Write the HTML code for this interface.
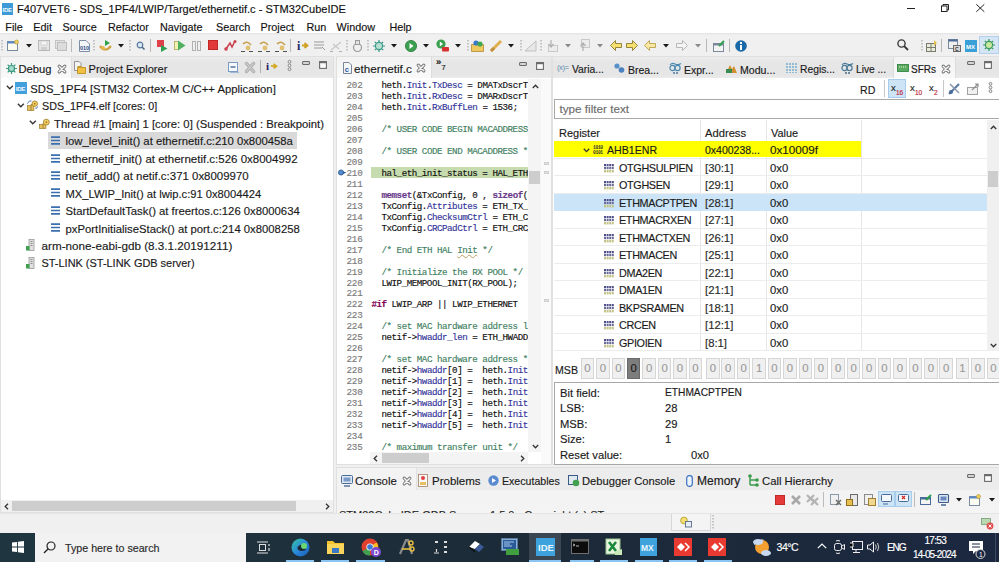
<!DOCTYPE html>
<html><head><meta charset="utf-8">
<style>
*{margin:0;padding:0;box-sizing:border-box}
html,body{width:999px;height:562px;overflow:hidden;background:#f0f0f0;font-family:"Liberation Sans",sans-serif;color:#1e1e1e}
.a{position:absolute;white-space:nowrap;-webkit-text-stroke:0.15px currentColor}
svg.a{overflow:visible}
.code{position:absolute;white-space:pre;font-family:"Liberation Mono",monospace;font-size:9.2px;letter-spacing:-0.47px;line-height:10.93px;color:#101010}
.ln{color:#7a7a7a}
.fl{color:#34349a}
.cm{color:#3f7f5f}
.pp{color:#7f0055;font-weight:bold}
.fn{color:#6a3a8a;font-weight:bold}
</style></head><body>

<div class="a" style="left:0px;top:0px;width:999px;height:33px;background:#fff;"></div>
<div class="a" style="left:2px;top:3px;width:11px;height:12px;background:#3d9ad6;"></div>
<svg class="a" style="left:2px;top:3px" width="11" height="12" viewBox="0 0 11 12"><text x="0.6" y="8.8" font-size="6" font-family="Liberation Sans" font-weight="bold" fill="#f0f8fe" letter-spacing="-0.35">IDE</text></svg>
<div class="a" style="left:17px;top:1.30px;line-height:16px;font-size:11.05px;color:#111;">F407VET6 - SDS_1PF4/LWIP/Target/ethernetif.c - STM32CubeIDE</div>
<div class="a" style="left:907px;top:8px;width:7.5px;height:1px;background:#222;"></div>
<svg class="a" style="left:941px;top:4px" width="8" height="8" viewBox="0 0 8 8"><rect x="0.5" y="2" width="5.5" height="5.5" fill="none" stroke="#222"/><path d="M2 2V0.5H7.5V6H6" fill="none" stroke="#222"/></svg>
<svg class="a" style="left:976px;top:4px" width="9" height="8" viewBox="0 0 9 8"><path d="M0.3 0.3L8.3 7.8M8.3 0.3L0.3 7.8" stroke="#222" stroke-width="1"/></svg>
<div class="a" style="left:5.3px;top:19.10px;line-height:16px;font-size:10.8px;color:#111;">File</div>
<div class="a" style="left:33.3px;top:19.10px;line-height:16px;font-size:10.8px;color:#111;">Edit</div>
<div class="a" style="left:62.5px;top:19.10px;line-height:16px;font-size:10.8px;color:#111;">Source</div>
<div class="a" style="left:108px;top:19.10px;line-height:16px;font-size:10.8px;color:#111;">Refactor</div>
<div class="a" style="left:160px;top:19.10px;line-height:16px;font-size:10.8px;color:#111;">Navigate</div>
<div class="a" style="left:216px;top:19.10px;line-height:16px;font-size:10.8px;color:#111;">Search</div>
<div class="a" style="left:260.5px;top:19.10px;line-height:16px;font-size:10.8px;color:#111;">Project</div>
<div class="a" style="left:306.4px;top:19.10px;line-height:16px;font-size:10.8px;color:#111;">Run</div>
<div class="a" style="left:336.6px;top:19.10px;line-height:16px;font-size:10.8px;color:#111;">Window</div>
<div class="a" style="left:389.4px;top:19.10px;line-height:16px;font-size:10.8px;color:#111;">Help</div>
<div class="a" style="left:0px;top:33px;width:999px;height:23px;background:#f0f0f0;"></div>
<div class="a" style="left:0;top:33px;width:999px;height:2px;background:linear-gradient(#e2e2e2,#f0f0f0)"></div>
<svg class="a" style="left:1px;top:40px" width="2" height="11" viewBox="0 0 2 11"><path d="M1 0V11" stroke="#9a9a9a" stroke-width="1" stroke-dasharray="1.5 1.5"/></svg>
<svg class="a" style="left:7px;top:40px" width="12" height="11" viewBox="0 0 12 11"><rect x="0.5" y="1.5" width="10" height="9" fill="#fbfbf0" stroke="#7a8aa0"/><rect x="0.5" y="1.5" width="10" height="2" fill="#5a8ac8"/><circle cx="9.5" cy="2" r="2" fill="#f0d060" stroke="#b09030" stroke-width="0.6"/></svg>
<svg class="a" style="left:26px;top:44px" width="6" height="4" viewBox="0 0 6 4"><path d="M0 0H6L3 3.5Z" fill="#1a1a1a"/></svg>
<svg class="a" style="left:38px;top:40px" width="12" height="11" viewBox="0 0 12 11"><rect x="0.5" y="0.5" width="11" height="10" fill="#e6e6e6" stroke="#b8b8b8"/><rect x="3" y="1" width="6" height="4" fill="#f4f4f4" stroke="#c4c4c4" stroke-width="0.6"/><rect x="3" y="7" width="6" height="3" fill="#cfcfcf"/></svg>
<svg class="a" style="left:55px;top:40px" width="12" height="11" viewBox="0 0 12 11"><rect x="0.5" y="0.5" width="9" height="8" fill="#e2e2e2" stroke="#c4c4c4"/><rect x="2.5" y="2.5" width="9" height="8" fill="#dcdcdc" stroke="#bdbdbd"/></svg>
<div class="a" style="left:71px;top:39px;width:1px;height:13px;background:#b8b8b8;"></div>
<svg class="a" style="left:79px;top:40px" width="11" height="12" viewBox="0 0 11 12"><path d="M0.5 0.5H7L10.5 4V11.5H0.5Z" fill="#f4f6fa" stroke="#7d8ea6"/><text x="1" y="10" font-size="5.5" font-family="Liberation Sans" font-weight="bold" fill="#2a4a80">010</text></svg>
<svg class="a" style="left:93px;top:40px" width="2" height="11" viewBox="0 0 2 11"><path d="M1 0V11" stroke="#9a9a9a" stroke-width="1" stroke-dasharray="1.5 1.5"/></svg>
<svg class="a" style="left:99px;top:39px" width="13" height="13" viewBox="0 0 13 13"><path d="M1 7 Q6 14 12 7" fill="none" stroke="#d0a040" stroke-width="2.2"/><circle cx="4" cy="9" r="2" fill="#e8b850"/><path d="M6 1L11 4L6 7Z" fill="#2fa04a"/></svg>
<svg class="a" style="left:118px;top:44px" width="6" height="4" viewBox="0 0 6 4"><path d="M0 0H6L3 3.5Z" fill="#1a1a1a"/></svg>
<svg class="a" style="left:129px;top:40px" width="2" height="11" viewBox="0 0 2 11"><path d="M1 0V11" stroke="#9a9a9a" stroke-width="1" stroke-dasharray="1.5 1.5"/></svg>
<svg class="a" style="left:136px;top:41px" width="9" height="9" viewBox="0 0 9 9"><circle cx="4" cy="4" r="2.8" fill="#d8e8f4" stroke="#5a7a9a" stroke-width="1.2"/><path d="M6 6L8.5 8.5" stroke="#4a6a8a" stroke-width="1.6"/></svg>
<div class="a" style="left:150px;top:39px;width:1px;height:13px;background:#b8b8b8;"></div>
<svg class="a" style="left:157px;top:40px" width="11" height="12" viewBox="0 0 11 12"><rect x="0" y="0" width="7" height="7" fill="#e0404a"/><path d="M4 5L10.5 8.5L4 12Z" fill="#30a050"/></svg>
<svg class="a" style="left:174px;top:40px" width="12" height="11" viewBox="0 0 12 11"><rect x="0.5" y="1.5" width="4" height="8" fill="#f4f0b0" stroke="#b0a860" stroke-width="0.8"/><path d="M4 0.5L11.5 5.5L4 10.5Z" fill="#50b060"/></svg>
<svg class="a" style="left:192px;top:40px" width="9" height="11" viewBox="0 0 9 11"><rect x="0.5" y="1.5" width="3" height="9" fill="#f0f0f0" stroke="#b0b0b0"/><rect x="5.5" y="1.5" width="3" height="9" fill="#f0f0f0" stroke="#b0b0b0"/></svg>
<svg class="a" style="left:208px;top:40px" width="10" height="10" viewBox="0 0 10 10"><rect x="0.5" y="0.5" width="9" height="9" fill="#e23a3a" stroke="#c02828"/></svg>
<svg class="a" style="left:224px;top:40px" width="12" height="11" viewBox="0 0 12 11"><path d="M2 9L6 3L8 7L11 1" fill="none" stroke="#c84050" stroke-width="1.6"/><circle cx="2" cy="9" r="1.8" fill="#d04050"/><circle cx="11" cy="1.5" r="1.5" fill="#d04050"/></svg>
<svg class="a" style="left:241px;top:40px" width="12" height="12" viewBox="0 0 12 12"><path d="M2 4Q6 0 10 5" fill="none" stroke="#c8a050" stroke-width="1.6"/><circle cx="7" cy="8" r="2.4" fill="#e0c070"/><path d="M0 11.5H4M8 11.5H12" stroke="#505050" stroke-width="1"/></svg>
<svg class="a" style="left:258px;top:40px" width="12" height="12" viewBox="0 0 12 12"><path d="M2 4Q6 0 10 5" fill="none" stroke="#c8a050" stroke-width="1.6"/><circle cx="7" cy="8" r="2.4" fill="#e0c070"/><path d="M0 11.5H4M8 11.5H12" stroke="#505050" stroke-width="1"/></svg>
<svg class="a" style="left:275px;top:40px" width="12" height="12" viewBox="0 0 12 12"><path d="M2 4Q6 0 10 5" fill="none" stroke="#c8a050" stroke-width="1.6"/><circle cx="7" cy="8" r="2.4" fill="#e0c070"/><path d="M0 11.5H4M8 11.5H12" stroke="#505050" stroke-width="1"/></svg>
<div class="a" style="left:290px;top:39px;width:1px;height:13px;background:#b8b8b8;"></div>
<svg class="a" style="left:297px;top:40px" width="12" height="11" viewBox="0 0 12 11"><text x="0" y="10" font-size="12" font-family="Liberation Serif" font-weight="bold" fill="#202a6a">i</text><path d="M5 5.5H9M7.5 3L10.5 5.5L7.5 8" fill="none" stroke="#d0a020" stroke-width="1.8"/></svg>
<svg class="a" style="left:314px;top:41px" width="12" height="10" viewBox="0 0 12 10"><path d="M0 1H10M0 4H10M0 7H8" stroke="#9a9a9a" stroke-width="1.2"/><path d="M8 6L11 9" stroke="#9a9a9a"/></svg>
<svg class="a" style="left:330px;top:40px" width="13" height="12" viewBox="0 0 13 12"><path d="M1 10L11 2M3 4L9 9" stroke="#c8c8c8" stroke-width="1.4"/><path d="M0 11.5H3M9 11.5H12" stroke="#b0b0b0"/></svg>
<svg class="a" style="left:346px;top:40px" width="2" height="11" viewBox="0 0 2 11"><path d="M1 0V11" stroke="#9a9a9a" stroke-width="1" stroke-dasharray="1.5 1.5"/></svg>
<svg class="a" style="left:352px;top:40px" width="11" height="12" viewBox="0 0 11 12"><circle cx="5.5" cy="7.5" r="4" fill="#f0f0f0" stroke="#9a9a9a" stroke-width="1.2"/><rect x="3.5" y="0.5" width="4" height="4" fill="#e0e0e0" stroke="#9a9a9a"/></svg>
<svg class="a" style="left:367px;top:40px" width="2" height="11" viewBox="0 0 2 11"><path d="M1 0V11" stroke="#9a9a9a" stroke-width="1" stroke-dasharray="1.5 1.5"/></svg>
<svg class="a" style="left:373px;top:40px" width="12" height="12" viewBox="0 0 12 12"><circle cx="6" cy="6" r="3.6" fill="#b8e0d0" stroke="#3a9a8a" stroke-width="1.2"/><path d="M6 0V2M6 10V12M0 6H2M10 6H12M1.8 1.8L3.2 3.2M8.8 8.8L10.2 10.2M1.8 10.2L3.2 8.8M8.8 3.2L10.2 1.8" stroke="#3a9a8a" stroke-width="1.2"/></svg>
<svg class="a" style="left:391px;top:44px" width="6" height="4" viewBox="0 0 6 4"><path d="M0 0H6L3 3.5Z" fill="#1a1a1a"/></svg>
<svg class="a" style="left:405px;top:40px" width="12" height="12" viewBox="0 0 12 12"><circle cx="6" cy="6" r="5.6" fill="#3aa050" stroke="#2a7a3a" stroke-width="0.8"/><path d="M4.5 3L8.5 6L4.5 9Z" fill="#fff"/></svg>
<svg class="a" style="left:423px;top:44px" width="6" height="4" viewBox="0 0 6 4"><path d="M0 0H6L3 3.5Z" fill="#1a1a1a"/></svg>
<svg class="a" style="left:436px;top:39px" width="14" height="13" viewBox="0 0 14 13"><circle cx="5" cy="5" r="4.6" fill="#3aa050"/><path d="M3.8 2.5L7 5L3.8 7.5Z" fill="#fff"/><rect x="6" y="8" width="7" height="4.5" rx="1" fill="#d83030"/></svg>
<svg class="a" style="left:455px;top:44px" width="6" height="4" viewBox="0 0 6 4"><path d="M0 0H6L3 3.5Z" fill="#1a1a1a"/></svg>
<svg class="a" style="left:467px;top:40px" width="2" height="11" viewBox="0 0 2 11"><path d="M1 0V11" stroke="#9a9a9a" stroke-width="1" stroke-dasharray="1.5 1.5"/></svg>
<svg class="a" style="left:471px;top:40px" width="13" height="12" viewBox="0 0 13 12"><path d="M0.5 4.5H12.5V11.5H0.5Z" fill="#f0c860" stroke="#b08a30" stroke-width="0.8"/><circle cx="5" cy="3" r="2.6" fill="#3a78c8"/><circle cx="9" cy="4" r="2.6" fill="#40a850"/></svg>
<svg class="a" style="left:490px;top:40px" width="12" height="12" viewBox="0 0 12 12"><path d="M1 11L11 1" stroke="#e0b050" stroke-width="3"/><path d="M1 11L4 8" stroke="#c09040" stroke-width="3"/></svg>
<svg class="a" style="left:508px;top:44px" width="6" height="4" viewBox="0 0 6 4"><path d="M0 0H6L3 3.5Z" fill="#1a1a1a"/></svg>
<svg class="a" style="left:520px;top:40px" width="2" height="11" viewBox="0 0 2 11"><path d="M1 0V11" stroke="#9a9a9a" stroke-width="1" stroke-dasharray="1.5 1.5"/></svg>
<svg class="a" style="left:524px;top:40px" width="13" height="12" viewBox="0 0 13 12"><path d="M1 11L12 1V11Z" fill="#e8e8e8" stroke="#c0c0c0"/></svg>
<svg class="a" style="left:540px;top:40px" width="2" height="11" viewBox="0 0 2 11"><path d="M1 0V11" stroke="#9a9a9a" stroke-width="1" stroke-dasharray="1.5 1.5"/></svg>
<svg class="a" style="left:546px;top:40px" width="12" height="12" viewBox="0 0 12 12"><rect x="2.5" y="5.5" width="9" height="6" fill="#ececec" stroke="#c8c8c8"/><path d="M5 0V6M2.5 4L5 7L7.5 4" fill="none" stroke="#b0b0b0" stroke-width="1.2"/></svg>
<svg class="a" style="left:565px;top:44px" width="6" height="4" viewBox="0 0 6 4"><path d="M0 0H6L3 3.5Z" fill="#8a8a8a"/></svg>
<svg class="a" style="left:578px;top:39px" width="12" height="13" viewBox="0 0 12 13"><rect x="3.5" y="0.5" width="8" height="8" fill="#ececec" stroke="#c8c8c8"/><path d="M5 12V5M2.5 7L5 4L7.5 7" fill="none" stroke="#b0b0b0" stroke-width="1.2"/></svg>
<svg class="a" style="left:597px;top:44px" width="6" height="4" viewBox="0 0 6 4"><path d="M0 0H6L3 3.5Z" fill="#8a8a8a"/></svg>
<svg class="a" style="left:610px;top:40px" width="12" height="11" viewBox="0 0 12 11"><path d="M0.5 5.5L5.5 0.5V3.5H11.5V7.5H5.5V10.5Z" fill="#f8e070" stroke="#8a7a30" stroke-width="0.9"/></svg>
<svg class="a" style="left:626px;top:40px" width="12" height="11" viewBox="0 0 12 11"><path d="M11.5 5.5L6.5 0.5V3.5H0.5V7.5H6.5V10.5Z" fill="#f8e070" stroke="#8a7a30" stroke-width="0.9"/></svg>
<svg class="a" style="left:644px;top:40px" width="12" height="11" viewBox="0 0 12 11"><path d="M0.5 5.5L5.5 0.5V3.5H11.5V7.5H5.5V10.5Z" fill="#f8e8a0" stroke="#b8a050" stroke-width="0.9"/></svg>
<svg class="a" style="left:663px;top:44px" width="6" height="4" viewBox="0 0 6 4"><path d="M0 0H6L3 3.5Z" fill="#1a1a1a"/></svg>
<svg class="a" style="left:676px;top:40px" width="12" height="11" viewBox="0 0 12 11"><path d="M11.5 5.5L6.5 0.5V3.5H0.5V7.5H6.5V10.5Z" fill="#f4f4f4" stroke="#b0b0b0" stroke-width="0.9"/></svg>
<svg class="a" style="left:695px;top:44px" width="6" height="4" viewBox="0 0 6 4"><path d="M0 0H6L3 3.5Z" fill="#8a8a8a"/></svg>
<div class="a" style="left:706px;top:39px;width:1px;height:13px;background:#b8b8b8;"></div>
<svg class="a" style="left:713px;top:40px" width="12" height="12" viewBox="0 0 12 12"><rect x="0.5" y="3.5" width="10" height="8" fill="#f4f4f4" stroke="#7a8a9a"/><rect x="0.5" y="3.5" width="10" height="2" fill="#7a8a9a"/><path d="M6 6L11 1" stroke="#30a050" stroke-width="2"/></svg>
<div class="a" style="left:729px;top:39px;width:1px;height:13px;background:#b8b8b8;"></div>
<svg class="a" style="left:735px;top:40px" width="12" height="12" viewBox="0 0 12 12"><circle cx="6" cy="6" r="5.8" fill="#1a6aaa"/><rect x="5" y="5" width="2" height="5" fill="#fff"/><rect x="5" y="2" width="2" height="2" fill="#fff"/></svg>
<svg class="a" style="left:897px;top:39px" width="12" height="12" viewBox="0 0 12 12"><circle cx="4.5" cy="4.5" r="3.6" fill="none" stroke="#3a3a3a" stroke-width="1.4"/><path d="M7 7L11 11" stroke="#3a3a3a" stroke-width="1.8"/></svg>
<svg class="a" style="left:921px;top:40px" width="2" height="11" viewBox="0 0 2 11"><path d="M1 0V11" stroke="#9a9a9a" stroke-width="1" stroke-dasharray="1.5 1.5"/></svg>
<svg class="a" style="left:926px;top:40px" width="12" height="12" viewBox="0 0 12 12"><rect x="0.5" y="3.5" width="9" height="8" fill="#e8ecd8" stroke="#7a7a70"/><path d="M5 3.5V11.5M0.5 7.5H9.5" stroke="#7a7a70"/><path d="M8 0L11 3L8 6Z" fill="#e8c050"/></svg>
<div class="a" style="left:941px;top:39px;width:1px;height:13px;background:#b8b8b8;"></div>
<svg class="a" style="left:948px;top:39px" width="13" height="13" viewBox="0 0 13 13"><rect x="0.5" y="0.5" width="9" height="9" fill="#f0f0f0" stroke="#7a8a9a"/><rect x="0.5" y="0.5" width="9" height="2" fill="#4a6a9a"/><rect x="5.5" y="6.5" width="7" height="6" fill="#d8d8d8" stroke="#6a6a6a"/><text x="7" y="12" font-size="5" font-family="Liberation Sans" font-weight="bold" fill="#333">C</text></svg>
<svg class="a" style="left:965px;top:40px" width="12" height="12" viewBox="0 0 12 12"><rect x="0" y="0" width="12" height="12" fill="#3aa0d8"/><text x="1" y="8.5" font-size="6" font-family="Liberation Sans" font-weight="bold" fill="#fff">MX</text></svg>
<div class="a" style="left:979px;top:36px;width:20px;height:18px;background:#d4e6f6;border:1px solid #b4d0ea"></div>
<svg class="a" style="left:983px;top:39px" width="12" height="12" viewBox="0 0 12 12"><circle cx="6" cy="6" r="3.6" fill="#c8e8a0" stroke="#3a9a5a" stroke-width="1.2"/><path d="M6 0V2M6 10V12M0 6H2M10 6H12M1.8 1.8L3.2 3.2M8.8 8.8L10.2 10.2M1.8 10.2L3.2 8.8M8.8 3.2L10.2 1.8" stroke="#3a9a5a" stroke-width="1.2"/></svg>
<div class="a" style="left:0px;top:56px;width:334px;height:457px;background:#fff;border:1px solid #e0e0e0"></div>
<div class="a" style="left:1px;top:57px;width:332px;height:21px;background:linear-gradient(#ececec,#e6e6e6 25%,#e6e6e6 85%,#ebebeb);"></div>
<div class="a" style="left:1px;top:57px;width:70px;height:21px;background:linear-gradient(#f3f3f3,#f9f9f9);"></div>
<div class="a" style="left:71px;top:57px;width:1px;height:21px;background:#e0e0e0;"></div>
<svg class="a" style="left:6px;top:62.5px" width="11" height="11" viewBox="0 0 12 12"><circle cx="6" cy="6" r="3.3" fill="#a8dcc8" stroke="#3a9a80" stroke-width="1.3"/><path d="M6 0V2.2M6 9.8V12M0 6H2.2M9.8 6H12M1.8 1.8L3.4 3.4M8.6 8.6L10.2 10.2M1.8 10.2L3.4 8.6M8.6 3.4L10.2 1.8" stroke="#3a9a80" stroke-width="1.3"/></svg>
<div class="a" style="left:18.5px;top:61.30px;line-height:16px;font-size:11.2px;color:#1a1a1a;">Debug</div>
<svg class="a" style="left:57.5px;top:64.5px" width="8" height="8" viewBox="0 0 8 8"><path d="M1.2 1.2L6.8 6.8M6.8 1.2L1.2 6.8" stroke="#707070" stroke-width="3.2" stroke-linecap="round"/><path d="M1.2 1.2L6.8 6.8M6.8 1.2L1.2 6.8" stroke="#f4f4f4" stroke-width="1.5" stroke-linecap="round"/></svg>
<svg class="a" style="left:74px;top:61px" width="13" height="13" viewBox="0 0 13 13"><path d="M0.5 0.5H5L7 2.5V9.5H0.5Z" fill="#f4f4f4" stroke="#8a8a8a" stroke-width="0.9"/><path d="M3.5 6.5H11.5V12.5H3.5Z" fill="#f0c040" stroke="#c09020" stroke-width="0.9"/><path d="M3.5 5.5H7L8 6.5" fill="#f0c040" stroke="#c09020" stroke-width="0.9"/></svg>
<div class="a" style="left:88.5px;top:61.30px;line-height:16px;font-size:11.1px;color:#1a1a1a;">Project Explorer</div>
<svg class="a" style="left:228px;top:62px" width="11" height="11" viewBox="0 0 11 11"><rect x="0.5" y="0.5" width="9" height="9" fill="#f4f8fc" stroke="#7a9ac0"/><path d="M2.5 5H7.5" stroke="#4a6a90" stroke-width="1.4"/><rect x="2" y="10" width="9" height="1" fill="#a0b8d8"/></svg>
<svg class="a" style="left:245px;top:62px" width="10" height="11" viewBox="0 0 10 11"><path d="M1.5 1.5L8.5 9.5M8.5 1.5L1.5 9.5" stroke="#a8a8a8" stroke-width="3.4" stroke-linecap="round"/><path d="M1.5 1.5L8.5 9.5M8.5 1.5L1.5 9.5" stroke="#c8c8c8" stroke-width="1.8" stroke-linecap="round"/></svg>
<div class="a" style="left:259.5px;top:59.5px;width:1.5px;height:13px;background:#b0b0b0;"></div>
<svg class="a" style="left:266px;top:61px" width="13" height="10" viewBox="0 0 13 10"><text x="0" y="9.3" font-size="11" font-family="Liberation Serif" font-weight="bold" fill="#1a1a5a">i</text><path d="M5 5.2H9M7.6 3L10.5 5.2L7.6 7.4" fill="none" stroke="#d4a820" stroke-width="1.7"/></svg>
<svg class="a" style="left:286.5px;top:60px" width="5" height="11" viewBox="0 0 5 11"><circle cx="2.5" cy="1.8" r="1.4" fill="#f4f4f4" stroke="#7a7a7a" stroke-width="0.9"/><circle cx="2.5" cy="5.5" r="1.4" fill="#f4f4f4" stroke="#7a7a7a" stroke-width="0.9"/><circle cx="2.5" cy="9.2" r="1.4" fill="#f4f4f4" stroke="#7a7a7a" stroke-width="0.9"/></svg>
<svg class="a" style="left:302px;top:61px" width="8" height="4" viewBox="0 0 8 4"><rect x="0.6" y="0.6" width="6.8" height="2.8" rx="0.6" fill="#fafafa" stroke="#6a6a6a" stroke-width="1.1"/></svg>
<svg class="a" style="left:318.5px;top:61.3px" width="8" height="8" viewBox="0 0 8 8"><rect x="0.6" y="0.6" width="6.8" height="6.8" fill="#fcfcfc" stroke="#6a6a6a" stroke-width="1.1"/><rect x="0.6" y="0.6" width="6.8" height="1.6" fill="#6a6a6a"/></svg>
<div class="a" style="left:48px;top:131.8px;width:249px;height:17.6px;background:#d9d9d9;"></div>
<svg class="a" style="left:5.5px;top:85.2px" width="8" height="5" viewBox="0 0 8 5"><path d="M0.8 0.8L3.8 3.8L6.8 0.8" fill="none" stroke="#333" stroke-width="1.3"/></svg>
<svg class="a" style="left:14.5px;top:82.2px" width="12" height="12" viewBox="0 0 12 12"><rect x="0" y="0" width="12" height="12" fill="#41a0dc"/><text x="0.8" y="8.6" font-size="6.2" font-family="Liberation Sans" font-weight="bold" fill="#f0f8fe" letter-spacing="-0.35">IDE</text></svg>
<div class="a" style="left:30.3px;top:80.90px;line-height:16px;font-size:11.3px;color:#1a1a1a;">SDS_1PF4 [STM32 Cortex-M C/C++ Application]</div>
<svg class="a" style="left:17px;top:102.65px" width="8" height="5" viewBox="0 0 8 5"><path d="M0.8 0.8L3.8 3.8L6.8 0.8" fill="none" stroke="#333" stroke-width="1.3"/></svg>
<svg class="a" style="left:27px;top:100.15px" width="11" height="11" viewBox="0 0 12 12"><rect x="0.5" y="6" width="4" height="5.5" fill="#e8c060" stroke="#a08030" stroke-width="0.8"/><rect x="4.5" y="5" width="3" height="6.5" fill="#e8c060" stroke="#a08030" stroke-width="0.8"/><circle cx="8.5" cy="4" r="3" fill="#f4d060" stroke="#a08030" stroke-width="0.9"/><circle cx="8.5" cy="4" r="1" fill="#a08030"/><path d="M0.5 4Q2 0 5 1M9 9Q11 10 11.5 7" fill="none" stroke="#3a6aa0" stroke-width="0.9"/></svg>
<div class="a" style="left:42px;top:98.35px;line-height:16px;font-size:10.75px;color:#1a1a1a;">SDS_1PF4.elf [cores: 0]</div>
<svg class="a" style="left:28.5px;top:120.1px" width="8" height="5" viewBox="0 0 8 5"><path d="M0.8 0.8L3.8 3.8L6.8 0.8" fill="none" stroke="#333" stroke-width="1.3"/></svg>
<svg class="a" style="left:38.5px;top:117.6px" width="11" height="11" viewBox="0 0 12 12"><rect x="0.5" y="7" width="4" height="4.5" fill="#e8c060" stroke="#a08030" stroke-width="0.8"/><rect x="4.5" y="6" width="3" height="5.5" fill="#e8c060" stroke="#a08030" stroke-width="0.8"/><circle cx="8" cy="4.5" r="3.2" fill="#f4d060" stroke="#a08030" stroke-width="0.9"/><circle cx="8" cy="4.5" r="1" fill="#a08030"/></svg>
<div class="a" style="left:54px;top:115.80px;line-height:16px;font-size:11.3px;color:#1a1a1a;">Thread #1 [main] 1 [core: 0] (Suspended : Breakpoint)</div>
<svg class="a" style="left:51px;top:136.05px" width="9" height="9" viewBox="0 0 9 9"><path d="M0 1.2H9M0 4.5H9M0 7.8H9" stroke="#3a70b0" stroke-width="1.7"/></svg>
<div class="a" style="left:65.5px;top:133.25px;line-height:16px;font-size:11.3px;color:#1a1a1a;">low_level_init() at ethernetif.c:210 0x800458a</div>
<svg class="a" style="left:51px;top:153.5px" width="9" height="9" viewBox="0 0 9 9"><path d="M0 1.2H9M0 4.5H9M0 7.8H9" stroke="#3a70b0" stroke-width="1.7"/></svg>
<div class="a" style="left:65.5px;top:150.70px;line-height:16px;font-size:11.5px;color:#1a1a1a;">ethernetif_init() at ethernetif.c:526 0x8004992</div>
<svg class="a" style="left:51px;top:170.95px" width="9" height="9" viewBox="0 0 9 9"><path d="M0 1.2H9M0 4.5H9M0 7.8H9" stroke="#3a70b0" stroke-width="1.7"/></svg>
<div class="a" style="left:65.5px;top:168.15px;line-height:16px;font-size:11.44px;color:#1a1a1a;">netif_add() at netif.c:371 0x8009970</div>
<svg class="a" style="left:51px;top:188.39999999999998px" width="9" height="9" viewBox="0 0 9 9"><path d="M0 1.2H9M0 4.5H9M0 7.8H9" stroke="#3a70b0" stroke-width="1.7"/></svg>
<div class="a" style="left:65.5px;top:185.60px;line-height:16px;font-size:11.2px;color:#1a1a1a;">MX_LWIP_Init() at lwip.c:91 0x8004424</div>
<svg class="a" style="left:51px;top:205.85px" width="9" height="9" viewBox="0 0 9 9"><path d="M0 1.2H9M0 4.5H9M0 7.8H9" stroke="#3a70b0" stroke-width="1.7"/></svg>
<div class="a" style="left:65.5px;top:203.05px;line-height:16px;font-size:11.3px;color:#1a1a1a;">StartDefaultTask() at freertos.c:126 0x8000634</div>
<svg class="a" style="left:51px;top:223.3px" width="9" height="9" viewBox="0 0 9 9"><path d="M0 1.2H9M0 4.5H9M0 7.8H9" stroke="#3a70b0" stroke-width="1.7"/></svg>
<div class="a" style="left:65.5px;top:220.50px;line-height:16px;font-size:11.3px;color:#1a1a1a;">pxPortInitialiseStack() at port.c:214 0x8008258</div>
<svg class="a" style="left:26px;top:239.25px" width="9" height="12" viewBox="0 0 9 12"><rect x="3" y="0.5" width="5" height="11" fill="#e0e0e0" stroke="#9a9a9a" stroke-width="0.8"/><path d="M4.5 2.5H6.5M4.5 4.5H6.5M4.5 6.5H6.5" stroke="#7a7a7a" stroke-width="0.8"/><rect x="0" y="7" width="3.5" height="4.5" fill="#40a050"/></svg>
<div class="a" style="left:41.5px;top:237.95px;line-height:16px;font-size:11.7px;color:#1a1a1a;">arm-none-eabi-gdb (8.3.1.20191211)</div>
<svg class="a" style="left:26px;top:256.7px" width="9" height="12" viewBox="0 0 9 12"><rect x="3" y="0.5" width="5" height="11" fill="#e0e0e0" stroke="#9a9a9a" stroke-width="0.8"/><path d="M4.5 2.5H6.5M4.5 4.5H6.5M4.5 6.5H6.5" stroke="#7a7a7a" stroke-width="0.8"/><rect x="0" y="7" width="3.5" height="4.5" fill="#40a050"/></svg>
<div class="a" style="left:41.5px;top:255.40px;line-height:16px;font-size:10.95px;color:#1a1a1a;">ST-LINK (ST-LINK GDB server)</div>
<div class="a" style="left:1px;top:500px;width:332px;height:12px;background:#f0f0f0;"></div>
<div class="a" style="left:12px;top:501px;width:284px;height:10px;background:#cdcdcd;"></div>
<svg class="a" style="left:4px;top:503px" width="5" height="7" viewBox="0 0 5 7"><path d="M4 0.8L1.2 3.5L4 6.2" fill="none" stroke="#333" stroke-width="1.3"/></svg>
<svg class="a" style="left:325px;top:503px" width="5" height="7" viewBox="0 0 5 7"><path d="M1 0.8L3.8 3.5L1 6.2" fill="none" stroke="#333" stroke-width="1.3"/></svg>
<div class="a" style="left:336px;top:56px;width:216px;height:409px;background:#fff;border:1px solid #e0e0e0"></div>
<div class="a" style="left:337px;top:57px;width:214px;height:21px;background:linear-gradient(#ececec,#e6e6e6 25%,#e6e6e6 85%,#ebebeb);"></div>
<div class="a" style="left:337px;top:57px;width:94px;height:21px;background:linear-gradient(#f3f3f3,#f9f9f9);"></div>
<div class="a" style="left:431px;top:57px;width:1px;height:21px;background:#dcdcdc;"></div>
<svg class="a" style="left:343px;top:62px" width="9" height="12" viewBox="0 0 9 12"><path d="M0.5 0.5H6L8.5 3V11.5H0.5Z" fill="#f4f6fa" stroke="#6a7a90" stroke-width="0.9"/><text x="1.8" y="9.5" font-size="7.5" font-family="Liberation Sans" font-weight="bold" fill="#2a5a9a">c</text></svg>
<div class="a" style="left:354px;top:61.30px;line-height:16px;font-size:11.7px;color:#1a1a1a;">ethernetif.c</div>
<svg class="a" style="left:417px;top:64px" width="8" height="8" viewBox="0 0 8 8"><path d="M1.2 1.2L6.8 6.8M6.8 1.2L1.2 6.8" stroke="#707070" stroke-width="3.2" stroke-linecap="round"/><path d="M1.2 1.2L6.8 6.8M6.8 1.2L1.2 6.8" stroke="#f4f4f4" stroke-width="1.5" stroke-linecap="round"/></svg>
<div class="a" style="left:436px;top:56.5px;font:bold 9.5px/10px 'Liberation Sans';color:#222">»</div>
<div class="a" style="left:441.5px;top:63.5px;font:7.5px/8px 'Liberation Sans';color:#222">7</div>
<svg class="a" style="left:519px;top:61.5px" width="8" height="4" viewBox="0 0 8 4"><rect x="0.6" y="0.6" width="6.8" height="2.8" rx="0.6" fill="#fafafa" stroke="#6a6a6a" stroke-width="1.1"/></svg>
<svg class="a" style="left:535.5px;top:61.5px" width="8" height="8" viewBox="0 0 8 8"><rect x="0.6" y="0.6" width="6.8" height="6.8" fill="#fcfcfc" stroke="#6a6a6a" stroke-width="1.1"/><rect x="0.6" y="0.6" width="6.8" height="1.6" fill="#6a6a6a"/></svg>
<div class="a" style="left:371px;top:167.136px;width:157px;height:10.6px;background:#c6dcae;"></div>
<svg class="a" style="left:337.5px;top:168.136px" width="9" height="9" viewBox="0 0 9 9"><circle cx="3" cy="4.5" r="2.6" fill="#5a8ac8" stroke="#2a5a98" stroke-width="0.8"/><path d="M5 3.5L8.5 4.5L5 6" fill="#2a5a98"/></svg>
<div class="a" style="left:336px;top:79px;width:192px;height:372px;overflow:hidden">
<div class="code ln" style="left:10px;top:2.10px;width:16.5px;text-align:right;letter-spacing:-0.2px">202</div>
<div class="code" style="left:35.4px;top:2.10px">  heth.<span class="fl">Init</span>.<span class="fl">TxDesc</span> = DMATxDscrTab;</div>
<div class="code ln" style="left:10px;top:13.07px;width:16.5px;text-align:right;letter-spacing:-0.2px">203</div>
<div class="code" style="left:35.4px;top:13.07px">  heth.<span class="fl">Init</span>.<span class="fl">RxDesc</span> = DMARxDscrTab;</div>
<div class="code ln" style="left:10px;top:24.03px;width:16.5px;text-align:right;letter-spacing:-0.2px">204</div>
<div class="code" style="left:35.4px;top:24.03px">  heth.<span class="fl">Init</span>.<span class="fl">RxBuffLen</span> = 1536;</div>
<div class="code ln" style="left:10px;top:35.00px;width:16.5px;text-align:right;letter-spacing:-0.2px">205</div>
<div class="code" style="left:35.4px;top:35.00px"></div>
<div class="code ln" style="left:10px;top:45.97px;width:16.5px;text-align:right;letter-spacing:-0.2px">206</div>
<div class="code" style="left:35.4px;top:45.97px">  <span class="cm">/* USER CODE BEGIN MACADDRESS */</span></div>
<div class="code ln" style="left:10px;top:56.93px;width:16.5px;text-align:right;letter-spacing:-0.2px">207</div>
<div class="code" style="left:35.4px;top:56.93px"></div>
<div class="code ln" style="left:10px;top:67.90px;width:16.5px;text-align:right;letter-spacing:-0.2px">208</div>
<div class="code" style="left:35.4px;top:67.90px">  <span class="cm">/* USER CODE END MACADDRESS */</span></div>
<div class="code ln" style="left:10px;top:78.87px;width:16.5px;text-align:right;letter-spacing:-0.2px">209</div>
<div class="code" style="left:35.4px;top:78.87px"></div>
<div class="code ln" style="left:10px;top:89.84px;width:16.5px;text-align:right;letter-spacing:-0.2px">210</div>
<div class="code" style="left:35.4px;top:89.84px">  hal_eth_init_status = HAL_ETH_Init(&amp;heth);</div>
<div class="code ln" style="left:10px;top:100.80px;width:16.5px;text-align:right;letter-spacing:-0.2px">211</div>
<div class="code" style="left:35.4px;top:100.80px"></div>
<div class="code ln" style="left:10px;top:111.77px;width:16.5px;text-align:right;letter-spacing:-0.2px">212</div>
<div class="code" style="left:35.4px;top:111.77px">  <span class="fn">memset</span>(&amp;TxConfig, 0 , <span class="fn">sizeof</span>(ETH_TxPacketConfig));</div>
<div class="code ln" style="left:10px;top:122.74px;width:16.5px;text-align:right;letter-spacing:-0.2px">213</div>
<div class="code" style="left:35.4px;top:122.74px">  TxConfig.<span class="fl">Attributes</span> = ETH_TX_PACKETS_FEATURES_CSUM;</div>
<div class="code ln" style="left:10px;top:133.70px;width:16.5px;text-align:right;letter-spacing:-0.2px">214</div>
<div class="code" style="left:35.4px;top:133.70px">  TxConfig.<span class="fl">ChecksumCtrl</span> = ETH_CHECKSUM_IPHDR_PAYLOAD;</div>
<div class="code ln" style="left:10px;top:144.67px;width:16.5px;text-align:right;letter-spacing:-0.2px">215</div>
<div class="code" style="left:35.4px;top:144.67px">  TxConfig.<span class="fl">CRCPadCtrl</span> = ETH_CRC_PAD_INSERT;</div>
<div class="code ln" style="left:10px;top:155.64px;width:16.5px;text-align:right;letter-spacing:-0.2px">216</div>
<div class="code" style="left:35.4px;top:155.64px"></div>
<div class="code ln" style="left:10px;top:166.60px;width:16.5px;text-align:right;letter-spacing:-0.2px">217</div>
<div class="code" style="left:35.4px;top:166.60px">  <span class="cm">/* End ETH HAL <span style="text-decoration:underline wavy #c0a060;text-decoration-thickness:0.5px">Init</span> */</span></div>
<div class="code ln" style="left:10px;top:177.57px;width:16.5px;text-align:right;letter-spacing:-0.2px">218</div>
<div class="code" style="left:35.4px;top:177.57px"></div>
<div class="code ln" style="left:10px;top:188.54px;width:16.5px;text-align:right;letter-spacing:-0.2px">219</div>
<div class="code" style="left:35.4px;top:188.54px">  <span class="cm">/* Initialize the RX POOL */</span></div>
<div class="code ln" style="left:10px;top:199.51px;width:16.5px;text-align:right;letter-spacing:-0.2px">220</div>
<div class="code" style="left:35.4px;top:199.51px">  LWIP_MEMPOOL_INIT(RX_POOL);</div>
<div class="code ln" style="left:10px;top:210.47px;width:16.5px;text-align:right;letter-spacing:-0.2px">221</div>
<div class="code" style="left:35.4px;top:210.47px"></div>
<div class="code ln" style="left:10px;top:221.44px;width:16.5px;text-align:right;letter-spacing:-0.2px">222</div>
<div class="code" style="left:35.4px;top:221.44px"><span class="pp">#if</span> LWIP_ARP || LWIP_ETHERNET</div>
<div class="code ln" style="left:10px;top:232.41px;width:16.5px;text-align:right;letter-spacing:-0.2px">223</div>
<div class="code" style="left:35.4px;top:232.41px"></div>
<div class="code ln" style="left:10px;top:243.37px;width:16.5px;text-align:right;letter-spacing:-0.2px">224</div>
<div class="code" style="left:35.4px;top:243.37px">  <span class="cm">/* set MAC hardware address length */</span></div>
<div class="code ln" style="left:10px;top:254.34px;width:16.5px;text-align:right;letter-spacing:-0.2px">225</div>
<div class="code" style="left:35.4px;top:254.34px">  netif-&gt;<span class="fl">hwaddr_len</span> = ETH_HWADDR_LEN;</div>
<div class="code ln" style="left:10px;top:265.31px;width:16.5px;text-align:right;letter-spacing:-0.2px">226</div>
<div class="code" style="left:35.4px;top:265.31px"></div>
<div class="code ln" style="left:10px;top:276.27px;width:16.5px;text-align:right;letter-spacing:-0.2px">227</div>
<div class="code" style="left:35.4px;top:276.27px">  <span class="cm">/* set MAC hardware address */</span></div>
<div class="code ln" style="left:10px;top:287.24px;width:16.5px;text-align:right;letter-spacing:-0.2px">228</div>
<div class="code" style="left:35.4px;top:287.24px">  netif-&gt;<span class="fl">hwaddr</span>[0] =  heth.<span class="fl">Init</span>.<span class="fl">MACAddr</span>[0];</div>
<div class="code ln" style="left:10px;top:298.21px;width:16.5px;text-align:right;letter-spacing:-0.2px">229</div>
<div class="code" style="left:35.4px;top:298.21px">  netif-&gt;<span class="fl">hwaddr</span>[1] =  heth.<span class="fl">Init</span>.<span class="fl">MACAddr</span>[1];</div>
<div class="code ln" style="left:10px;top:309.18px;width:16.5px;text-align:right;letter-spacing:-0.2px">230</div>
<div class="code" style="left:35.4px;top:309.18px">  netif-&gt;<span class="fl">hwaddr</span>[2] =  heth.<span class="fl">Init</span>.<span class="fl">MACAddr</span>[2];</div>
<div class="code ln" style="left:10px;top:320.14px;width:16.5px;text-align:right;letter-spacing:-0.2px">231</div>
<div class="code" style="left:35.4px;top:320.14px">  netif-&gt;<span class="fl">hwaddr</span>[3] =  heth.<span class="fl">Init</span>.<span class="fl">MACAddr</span>[3];</div>
<div class="code ln" style="left:10px;top:331.11px;width:16.5px;text-align:right;letter-spacing:-0.2px">232</div>
<div class="code" style="left:35.4px;top:331.11px">  netif-&gt;<span class="fl">hwaddr</span>[4] =  heth.<span class="fl">Init</span>.<span class="fl">MACAddr</span>[4];</div>
<div class="code ln" style="left:10px;top:342.08px;width:16.5px;text-align:right;letter-spacing:-0.2px">233</div>
<div class="code" style="left:35.4px;top:342.08px">  netif-&gt;<span class="fl">hwaddr</span>[5] =  heth.<span class="fl">Init</span>.<span class="fl">MACAddr</span>[5];</div>
<div class="code ln" style="left:10px;top:353.04px;width:16.5px;text-align:right;letter-spacing:-0.2px">234</div>
<div class="code" style="left:35.4px;top:353.04px"></div>
<div class="code ln" style="left:10px;top:364.01px;width:16.5px;text-align:right;letter-spacing:-0.2px">235</div>
<div class="code" style="left:35.4px;top:364.01px">  <span class="cm">/* maximum transfer unit */</span></div>
</div>
<div class="a" style="left:528px;top:79px;width:13px;height:373px;background:#f4f4f4;"></div>
<div class="a" style="left:529px;top:171px;width:11px;height:13px;background:#cdcdcd;"></div>
<svg class="a" style="left:531.5px;top:84px" width="7" height="5" viewBox="0 0 7 5"><path d="M0.8 4L3.5 1.2L6.2 4" fill="none" stroke="#333" stroke-width="1.3"/></svg>
<svg class="a" style="left:532px;top:444px" width="7" height="5" viewBox="0 0 7 5"><path d="M0.8 1L3.5 3.8L6.2 1" fill="none" stroke="#333" stroke-width="1.3"/></svg>
<div class="a" style="left:541px;top:79px;width:10px;height:385px;background:#fafafa;"></div>
<div class="a" style="left:544px;top:161.5px;width:5px;height:3px;background:#e4e4e4;border:1px solid #cfcfcf"></div>
<div class="a" style="left:544px;top:171px;width:5px;height:3px;background:#e4e4e4;border:1px solid #cfcfcf"></div>
<div class="a" style="left:544px;top:299px;width:5px;height:3px;background:#e4e4e4;border:1px solid #cfcfcf"></div>
<div class="a" style="left:370px;top:452px;width:158px;height:12px;background:#f4f4f4;"></div>
<div class="a" style="left:382px;top:453px;width:47px;height:10px;background:#cdcdcd;"></div>
<svg class="a" style="left:372.5px;top:455px" width="5" height="7" viewBox="0 0 5 7"><path d="M4 0.8L1.2 3.5L4 6.2" fill="none" stroke="#333" stroke-width="1.3"/></svg>
<svg class="a" style="left:520px;top:455px" width="5" height="7" viewBox="0 0 5 7"><path d="M1 0.8L3.8 3.5L1 6.2" fill="none" stroke="#333" stroke-width="1.3"/></svg>
<div class="a" style="left:552px;top:56px;width:447px;height:409px;background:#fff;border:1px solid #e0e0e0;border-right:none"></div>
<div class="a" style="left:553px;top:57px;width:446px;height:21px;background:linear-gradient(#ececec,#e6e6e6 25%,#e6e6e6 85%,#ebebeb);"></div>
<div class="a" style="left:893.5px;top:57px;width:61px;height:21px;background:linear-gradient(#f3f3f3,#f9f9f9);"></div>
<div class="a" style="left:893px;top:57px;width:1px;height:21px;background:#dcdcdc;"></div>
<div class="a" style="left:954.5px;top:57px;width:1px;height:21px;background:#dcdcdc;"></div>
<svg class="a" style="left:557px;top:63px" width="12" height="9" viewBox="0 0 12 9"><text x="0" y="7" font-size="7.5" font-family="Liberation Sans" fill="#5a88b0" letter-spacing="-0.4">(x)=</text></svg>
<div class="a" style="left:572px;top:62.00px;line-height:16px;font-size:10.3px;color:#1a1a1a;">Varia...</div>
<svg class="a" style="left:614px;top:63px" width="11" height="10" viewBox="0 0 11 10"><circle cx="3" cy="3" r="2.6" fill="#5a90c8"/><circle cx="7.5" cy="7" r="2.8" fill="#4a80c0"/></svg>
<div class="a" style="left:628px;top:62.00px;line-height:16px;font-size:10.5px;color:#1a1a1a;">Brea...</div>
<svg class="a" style="left:669px;top:62px" width="13" height="12" viewBox="0 0 13 12"><circle cx="3.5" cy="6" r="2.6" fill="none" stroke="#4a8ab0" stroke-width="1.2"/><circle cx="8.5" cy="6" r="2.6" fill="none" stroke="#4a8ab0" stroke-width="1.2"/><path d="M1 3Q3 0.5 6 2T12 1.5" fill="none" stroke="#4a8ab0" stroke-width="1.1"/><circle cx="5" cy="11" r="0.9" fill="#3a6a98"/><circle cx="8" cy="11" r="0.9" fill="#3a6a98"/></svg>
<div class="a" style="left:684px;top:62.00px;line-height:16px;font-size:10.5px;color:#1a1a1a;">Expr...</div>
<svg class="a" style="left:726px;top:63px" width="11" height="10" viewBox="0 0 11 10"><path d="M0 10L4 2L6 6L8 3L11 10Z" fill="#d09030"/><rect x="0" y="6" width="6" height="4" fill="#3a8a50"/></svg>
<div class="a" style="left:740px;top:62.00px;line-height:16px;font-size:10.6px;color:#1a1a1a;">Modu...</div>
<svg class="a" style="left:786px;top:63px" width="12" height="10" viewBox="0 0 12 10"><path d="M1 0V10M4 0V10M7 0V10M10 0V10" stroke="#5aa0c8" stroke-width="1.2" stroke-dasharray="2 1"/></svg>
<div class="a" style="left:800px;top:62.00px;line-height:16px;font-size:10.3px;color:#1a1a1a;">Regis...</div>
<svg class="a" style="left:841px;top:62px" width="13" height="12" viewBox="0 0 13 12"><circle cx="3.5" cy="6" r="2.6" fill="none" stroke="#4a7a98" stroke-width="1.2"/><circle cx="8.5" cy="6" r="2.6" fill="none" stroke="#4a7a98" stroke-width="1.2"/><path d="M1 3Q3 0.5 6 2T12 1.5" fill="none" stroke="#4a7a98" stroke-width="1.1"/><circle cx="5" cy="11" r="0.9" fill="#3a5a78"/><circle cx="8" cy="11" r="0.9" fill="#3a5a78"/></svg>
<div class="a" style="left:856px;top:62.00px;line-height:16px;font-size:10.2px;color:#1a1a1a;">Live ...</div>
<svg class="a" style="left:897px;top:64px" width="12" height="8" viewBox="0 0 12 8"><rect x="0.5" y="0.5" width="11" height="7" fill="#5aaa60" stroke="#2a7a3a" stroke-width="0.8"/><path d="M2 3H10" stroke="#e8f4e0" stroke-width="1" stroke-dasharray="1 1"/></svg>
<div class="a" style="left:911px;top:62.10px;line-height:16px;font-size:10px;color:#1a1a1a;">SFRs</div>
<svg class="a" style="left:941.5px;top:64.5px" width="8" height="8" viewBox="0 0 8 8"><path d="M1.2 1.2L6.8 6.8M6.8 1.2L1.2 6.8" stroke="#707070" stroke-width="3.2" stroke-linecap="round"/><path d="M1.2 1.2L6.8 6.8M6.8 1.2L1.2 6.8" stroke="#f4f4f4" stroke-width="1.5" stroke-linecap="round"/></svg>
<svg class="a" style="left:967px;top:61px" width="8" height="4" viewBox="0 0 8 4"><rect x="0.6" y="0.6" width="6.8" height="2.8" rx="0.6" fill="#fafafa" stroke="#6a6a6a" stroke-width="1.1"/></svg>
<svg class="a" style="left:983.5px;top:61px" width="8" height="8" viewBox="0 0 8 8"><rect x="0.6" y="0.6" width="6.8" height="6.8" fill="#fcfcfc" stroke="#6a6a6a" stroke-width="1.1"/><rect x="0.6" y="0.6" width="6.8" height="1.6" fill="#6a6a6a"/></svg>
<div class="a" style="left:860px;top:82.20px;line-height:16px;font-size:10.6px;color:#1a1a1a;">RD</div>
<div class="a" style="left:884px;top:80px;width:1px;height:17px;background:#c8c8c8;"></div>
<div class="a" style="left:888px;top:79px;width:18px;height:19px;background:#cde4f7;border:1px solid #a8cdec"></div>
<div class="a" style="left:891px;top:83px;font:9.5px/10px 'Liberation Sans';color:#1a1a22">x</div>
<div class="a" style="left:896px;top:89px;font:6.5px/7px 'Liberation Sans';color:#c02838">16</div>
<div class="a" style="left:910px;top:83px;font:9.5px/10px 'Liberation Sans';color:#1a1a22">x</div>
<div class="a" style="left:915px;top:89px;font:6.5px/7px 'Liberation Sans';color:#c02838">10</div>
<div class="a" style="left:929px;top:83px;font:9.5px/10px 'Liberation Sans';color:#1a1a22">x</div>
<div class="a" style="left:934px;top:89px;font:6.5px/7px 'Liberation Sans';color:#c02838">2</div>
<div class="a" style="left:943px;top:80px;width:1px;height:17px;background:#c8c8c8;"></div>
<svg class="a" style="left:948px;top:82px" width="13" height="13" viewBox="0 0 13 13"><path d="M1 12L11 2" stroke="#5a7aa0" stroke-width="2.2"/><path d="M2 2L11 11" stroke="#8a9ab0" stroke-width="1.6"/><circle cx="3" cy="10" r="2" fill="#4a6a98"/></svg>
<svg class="a" style="left:967px;top:83px" width="13" height="12" viewBox="0 0 13 12"><rect x="0.5" y="4.5" width="10" height="7" fill="#f0f0f0" stroke="#a0a0a0"/><path d="M5 7L11 1M8 1H11V4" fill="none" stroke="#909090" stroke-width="1.2"/></svg>
<svg class="a" style="left:987.5px;top:82px" width="5" height="11" viewBox="0 0 5 11"><circle cx="2.5" cy="1.8" r="1.4" fill="#f4f4f4" stroke="#7a7a7a" stroke-width="0.9"/><circle cx="2.5" cy="5.5" r="1.4" fill="#f4f4f4" stroke="#7a7a7a" stroke-width="0.9"/><circle cx="2.5" cy="9.2" r="1.4" fill="#f4f4f4" stroke="#7a7a7a" stroke-width="0.9"/></svg>
<div class="a" style="left:554px;top:99px;width:445px;height:20px;background:#fff;border:1px solid #a8a8a8;border-right:none"></div>
<div class="a" style="left:559.5px;top:101.30px;line-height:16px;font-size:11.7px;color:#6d6d6d;">type filter text</div>
<div class="a" style="left:554px;top:120px;width:433px;height:21px;background:#fff;"></div>
<div class="a" style="left:559px;top:124.70px;line-height:16px;font-size:11px;color:#1a1a1a;">Register</div>
<div class="a" style="left:700px;top:120px;width:1px;height:231px;background:#e6e6e6;"></div>
<div class="a" style="left:705px;top:124.70px;line-height:16px;font-size:11.2px;color:#1a1a1a;">Address</div>
<div class="a" style="left:766px;top:120px;width:1px;height:231px;background:#e6e6e6;"></div>
<div class="a" style="left:771px;top:124.70px;line-height:16px;font-size:10.9px;color:#1a1a1a;">Value</div>
<div class="a" style="left:861px;top:120px;width:1px;height:231px;background:#e6e6e6;"></div>
<div class="a" style="left:554px;top:157.9px;width:433px;height:1px;background:#ececec;"></div>
<div class="a" style="left:554px;top:175.4px;width:433px;height:1px;background:#ececec;"></div>
<div class="a" style="left:554px;top:192.9px;width:433px;height:1px;background:#ececec;"></div>
<div class="a" style="left:554px;top:210.4px;width:433px;height:1px;background:#ececec;"></div>
<div class="a" style="left:554px;top:227.9px;width:433px;height:1px;background:#ececec;"></div>
<div class="a" style="left:554px;top:245.4px;width:433px;height:1px;background:#ececec;"></div>
<div class="a" style="left:554px;top:262.9px;width:433px;height:1px;background:#ececec;"></div>
<div class="a" style="left:554px;top:280.4px;width:433px;height:1px;background:#ececec;"></div>
<div class="a" style="left:554px;top:297.9px;width:433px;height:1px;background:#ececec;"></div>
<div class="a" style="left:554px;top:315.4px;width:433px;height:1px;background:#ececec;"></div>
<div class="a" style="left:554px;top:332.9px;width:433px;height:1px;background:#ececec;"></div>
<div class="a" style="left:554px;top:350.4px;width:433px;height:1px;background:#ececec;"></div>
<div class="a" style="left:554px;top:367.9px;width:433px;height:1px;background:#ececec;"></div>
<div class="a" style="left:554px;top:141px;width:307px;height:16px;background:#ffff00;"></div>
<svg class="a" style="left:583px;top:147.5px" width="7" height="5" viewBox="0 0 7 5"><path d="M0.8 0.8L3.5 3.6L6.2 0.8" fill="none" stroke="#333" stroke-width="1.3"/></svg>
<svg class="a" style="left:593px;top:145px" width="12" height="9" viewBox="0 0 12 9"><text x="0" y="4" font-size="4.6" font-family="Liberation Mono" font-weight="bold" fill="#333" letter-spacing="-0.3">1010</text><text x="0" y="8.6" font-size="4.6" font-family="Liberation Mono" font-weight="bold" fill="#333" letter-spacing="-0.3">0101</text></svg>
<div class="a" style="left:607px;top:142.40px;line-height:16px;font-size:10.6px;color:#1a1a1a;">AHB1ENR</div>
<div class="a" style="left:705px;top:142.40px;line-height:16px;font-size:10.5px;color:#1a1a1a;">0x400238...</div>
<div class="a" style="left:770px;top:142.40px;line-height:16px;font-size:11.7px;color:#1a1a1a;">0x10009f</div>
<div class="a" style="left:554px;top:193.5px;width:433px;height:17.5px;background:#cce4f7;"></div>
<svg class="a" style="left:604px;top:163.5px" width="11" height="9" viewBox="0 0 11 9"><rect x="0.0" y="0" width="2" height="2.2" fill="#50508a"/><rect x="0.0" y="2.9" width="2" height="2.2" fill="#6a6a9a"/><rect x="0.0" y="5.8" width="2" height="2.6" fill="#c4c488"/><rect x="2.6" y="0" width="2" height="2.2" fill="#50508a"/><rect x="2.6" y="2.9" width="2" height="2.2" fill="#6a6a9a"/><rect x="2.6" y="5.8" width="2" height="2.6" fill="#c4c488"/><rect x="5.2" y="0" width="2" height="2.2" fill="#50508a"/><rect x="5.2" y="2.9" width="2" height="2.2" fill="#6a6a9a"/><rect x="5.2" y="5.8" width="2" height="2.6" fill="#c4c488"/><rect x="7.8" y="0" width="2" height="2.2" fill="#50508a"/><rect x="7.8" y="2.9" width="2" height="2.2" fill="#6a6a9a"/><rect x="7.8" y="5.8" width="2" height="2.6" fill="#c4c488"/></svg>
<div class="a" style="left:619px;top:159.50px;line-height:16px;font-size:10.8px;color:#1a1a1a;letter-spacing:-0.33px">OTGHSULPIEN</div>
<div class="a" style="left:705px;top:159.90px;line-height:16px;font-size:11.3px;color:#2a2a2a;">[30:1]</div>
<div class="a" style="left:770px;top:159.90px;line-height:16px;font-size:11.3px;color:#1a1a1a;">0x0</div>
<svg class="a" style="left:604px;top:181.0px" width="11" height="9" viewBox="0 0 11 9"><rect x="0.0" y="0" width="2" height="2.2" fill="#50508a"/><rect x="0.0" y="2.9" width="2" height="2.2" fill="#6a6a9a"/><rect x="0.0" y="5.8" width="2" height="2.6" fill="#c4c488"/><rect x="2.6" y="0" width="2" height="2.2" fill="#50508a"/><rect x="2.6" y="2.9" width="2" height="2.2" fill="#6a6a9a"/><rect x="2.6" y="5.8" width="2" height="2.6" fill="#c4c488"/><rect x="5.2" y="0" width="2" height="2.2" fill="#50508a"/><rect x="5.2" y="2.9" width="2" height="2.2" fill="#6a6a9a"/><rect x="5.2" y="5.8" width="2" height="2.6" fill="#c4c488"/><rect x="7.8" y="0" width="2" height="2.2" fill="#50508a"/><rect x="7.8" y="2.9" width="2" height="2.2" fill="#6a6a9a"/><rect x="7.8" y="5.8" width="2" height="2.6" fill="#c4c488"/></svg>
<div class="a" style="left:619px;top:177.00px;line-height:16px;font-size:10.8px;color:#1a1a1a;letter-spacing:-0.33px">OTGHSEN</div>
<div class="a" style="left:705px;top:177.40px;line-height:16px;font-size:11.3px;color:#2a2a2a;">[29:1]</div>
<div class="a" style="left:770px;top:177.40px;line-height:16px;font-size:11.3px;color:#1a1a1a;">0x0</div>
<svg class="a" style="left:604px;top:198.5px" width="11" height="9" viewBox="0 0 11 9"><rect x="0.0" y="0" width="2" height="2.2" fill="#50508a"/><rect x="0.0" y="2.9" width="2" height="2.2" fill="#6a6a9a"/><rect x="0.0" y="5.8" width="2" height="2.6" fill="#c4c488"/><rect x="2.6" y="0" width="2" height="2.2" fill="#50508a"/><rect x="2.6" y="2.9" width="2" height="2.2" fill="#6a6a9a"/><rect x="2.6" y="5.8" width="2" height="2.6" fill="#c4c488"/><rect x="5.2" y="0" width="2" height="2.2" fill="#50508a"/><rect x="5.2" y="2.9" width="2" height="2.2" fill="#6a6a9a"/><rect x="5.2" y="5.8" width="2" height="2.6" fill="#c4c488"/><rect x="7.8" y="0" width="2" height="2.2" fill="#50508a"/><rect x="7.8" y="2.9" width="2" height="2.2" fill="#6a6a9a"/><rect x="7.8" y="5.8" width="2" height="2.6" fill="#c4c488"/></svg>
<div class="a" style="left:619px;top:194.50px;line-height:16px;font-size:10.8px;color:#1a1a1a;letter-spacing:-0.33px">ETHMACPTPEN</div>
<div class="a" style="left:705px;top:194.90px;line-height:16px;font-size:11.3px;color:#2a2a2a;">[28:1]</div>
<div class="a" style="left:770px;top:194.90px;line-height:16px;font-size:11.3px;color:#1a1a1a;">0x0</div>
<svg class="a" style="left:604px;top:216.0px" width="11" height="9" viewBox="0 0 11 9"><rect x="0.0" y="0" width="2" height="2.2" fill="#50508a"/><rect x="0.0" y="2.9" width="2" height="2.2" fill="#6a6a9a"/><rect x="0.0" y="5.8" width="2" height="2.6" fill="#c4c488"/><rect x="2.6" y="0" width="2" height="2.2" fill="#50508a"/><rect x="2.6" y="2.9" width="2" height="2.2" fill="#6a6a9a"/><rect x="2.6" y="5.8" width="2" height="2.6" fill="#c4c488"/><rect x="5.2" y="0" width="2" height="2.2" fill="#50508a"/><rect x="5.2" y="2.9" width="2" height="2.2" fill="#6a6a9a"/><rect x="5.2" y="5.8" width="2" height="2.6" fill="#c4c488"/><rect x="7.8" y="0" width="2" height="2.2" fill="#50508a"/><rect x="7.8" y="2.9" width="2" height="2.2" fill="#6a6a9a"/><rect x="7.8" y="5.8" width="2" height="2.6" fill="#c4c488"/></svg>
<div class="a" style="left:619px;top:212.00px;line-height:16px;font-size:10.8px;color:#1a1a1a;letter-spacing:-0.33px">ETHMACRXEN</div>
<div class="a" style="left:705px;top:212.40px;line-height:16px;font-size:11.3px;color:#2a2a2a;">[27:1]</div>
<div class="a" style="left:770px;top:212.40px;line-height:16px;font-size:11.3px;color:#1a1a1a;">0x0</div>
<svg class="a" style="left:604px;top:233.5px" width="11" height="9" viewBox="0 0 11 9"><rect x="0.0" y="0" width="2" height="2.2" fill="#50508a"/><rect x="0.0" y="2.9" width="2" height="2.2" fill="#6a6a9a"/><rect x="0.0" y="5.8" width="2" height="2.6" fill="#c4c488"/><rect x="2.6" y="0" width="2" height="2.2" fill="#50508a"/><rect x="2.6" y="2.9" width="2" height="2.2" fill="#6a6a9a"/><rect x="2.6" y="5.8" width="2" height="2.6" fill="#c4c488"/><rect x="5.2" y="0" width="2" height="2.2" fill="#50508a"/><rect x="5.2" y="2.9" width="2" height="2.2" fill="#6a6a9a"/><rect x="5.2" y="5.8" width="2" height="2.6" fill="#c4c488"/><rect x="7.8" y="0" width="2" height="2.2" fill="#50508a"/><rect x="7.8" y="2.9" width="2" height="2.2" fill="#6a6a9a"/><rect x="7.8" y="5.8" width="2" height="2.6" fill="#c4c488"/></svg>
<div class="a" style="left:619px;top:229.50px;line-height:16px;font-size:10.8px;color:#1a1a1a;letter-spacing:-0.33px">ETHMACTXEN</div>
<div class="a" style="left:705px;top:229.90px;line-height:16px;font-size:11.3px;color:#2a2a2a;">[26:1]</div>
<div class="a" style="left:770px;top:229.90px;line-height:16px;font-size:11.3px;color:#1a1a1a;">0x0</div>
<svg class="a" style="left:604px;top:251.0px" width="11" height="9" viewBox="0 0 11 9"><rect x="0.0" y="0" width="2" height="2.2" fill="#50508a"/><rect x="0.0" y="2.9" width="2" height="2.2" fill="#6a6a9a"/><rect x="0.0" y="5.8" width="2" height="2.6" fill="#c4c488"/><rect x="2.6" y="0" width="2" height="2.2" fill="#50508a"/><rect x="2.6" y="2.9" width="2" height="2.2" fill="#6a6a9a"/><rect x="2.6" y="5.8" width="2" height="2.6" fill="#c4c488"/><rect x="5.2" y="0" width="2" height="2.2" fill="#50508a"/><rect x="5.2" y="2.9" width="2" height="2.2" fill="#6a6a9a"/><rect x="5.2" y="5.8" width="2" height="2.6" fill="#c4c488"/><rect x="7.8" y="0" width="2" height="2.2" fill="#50508a"/><rect x="7.8" y="2.9" width="2" height="2.2" fill="#6a6a9a"/><rect x="7.8" y="5.8" width="2" height="2.6" fill="#c4c488"/></svg>
<div class="a" style="left:619px;top:247.00px;line-height:16px;font-size:10.8px;color:#1a1a1a;letter-spacing:-0.33px">ETHMACEN</div>
<div class="a" style="left:705px;top:247.40px;line-height:16px;font-size:11.3px;color:#2a2a2a;">[25:1]</div>
<div class="a" style="left:770px;top:247.40px;line-height:16px;font-size:11.3px;color:#1a1a1a;">0x0</div>
<svg class="a" style="left:604px;top:268.5px" width="11" height="9" viewBox="0 0 11 9"><rect x="0.0" y="0" width="2" height="2.2" fill="#50508a"/><rect x="0.0" y="2.9" width="2" height="2.2" fill="#6a6a9a"/><rect x="0.0" y="5.8" width="2" height="2.6" fill="#c4c488"/><rect x="2.6" y="0" width="2" height="2.2" fill="#50508a"/><rect x="2.6" y="2.9" width="2" height="2.2" fill="#6a6a9a"/><rect x="2.6" y="5.8" width="2" height="2.6" fill="#c4c488"/><rect x="5.2" y="0" width="2" height="2.2" fill="#50508a"/><rect x="5.2" y="2.9" width="2" height="2.2" fill="#6a6a9a"/><rect x="5.2" y="5.8" width="2" height="2.6" fill="#c4c488"/><rect x="7.8" y="0" width="2" height="2.2" fill="#50508a"/><rect x="7.8" y="2.9" width="2" height="2.2" fill="#6a6a9a"/><rect x="7.8" y="5.8" width="2" height="2.6" fill="#c4c488"/></svg>
<div class="a" style="left:619px;top:264.50px;line-height:16px;font-size:10.8px;color:#1a1a1a;letter-spacing:-0.33px">DMA2EN</div>
<div class="a" style="left:705px;top:264.90px;line-height:16px;font-size:11.3px;color:#2a2a2a;">[22:1]</div>
<div class="a" style="left:770px;top:264.90px;line-height:16px;font-size:11.3px;color:#1a1a1a;">0x0</div>
<svg class="a" style="left:604px;top:286.0px" width="11" height="9" viewBox="0 0 11 9"><rect x="0.0" y="0" width="2" height="2.2" fill="#50508a"/><rect x="0.0" y="2.9" width="2" height="2.2" fill="#6a6a9a"/><rect x="0.0" y="5.8" width="2" height="2.6" fill="#c4c488"/><rect x="2.6" y="0" width="2" height="2.2" fill="#50508a"/><rect x="2.6" y="2.9" width="2" height="2.2" fill="#6a6a9a"/><rect x="2.6" y="5.8" width="2" height="2.6" fill="#c4c488"/><rect x="5.2" y="0" width="2" height="2.2" fill="#50508a"/><rect x="5.2" y="2.9" width="2" height="2.2" fill="#6a6a9a"/><rect x="5.2" y="5.8" width="2" height="2.6" fill="#c4c488"/><rect x="7.8" y="0" width="2" height="2.2" fill="#50508a"/><rect x="7.8" y="2.9" width="2" height="2.2" fill="#6a6a9a"/><rect x="7.8" y="5.8" width="2" height="2.6" fill="#c4c488"/></svg>
<div class="a" style="left:619px;top:282.00px;line-height:16px;font-size:10.8px;color:#1a1a1a;letter-spacing:-0.33px">DMA1EN</div>
<div class="a" style="left:705px;top:282.40px;line-height:16px;font-size:11.3px;color:#2a2a2a;">[21:1]</div>
<div class="a" style="left:770px;top:282.40px;line-height:16px;font-size:11.3px;color:#1a1a1a;">0x0</div>
<svg class="a" style="left:604px;top:303.5px" width="11" height="9" viewBox="0 0 11 9"><rect x="0.0" y="0" width="2" height="2.2" fill="#50508a"/><rect x="0.0" y="2.9" width="2" height="2.2" fill="#6a6a9a"/><rect x="0.0" y="5.8" width="2" height="2.6" fill="#c4c488"/><rect x="2.6" y="0" width="2" height="2.2" fill="#50508a"/><rect x="2.6" y="2.9" width="2" height="2.2" fill="#6a6a9a"/><rect x="2.6" y="5.8" width="2" height="2.6" fill="#c4c488"/><rect x="5.2" y="0" width="2" height="2.2" fill="#50508a"/><rect x="5.2" y="2.9" width="2" height="2.2" fill="#6a6a9a"/><rect x="5.2" y="5.8" width="2" height="2.6" fill="#c4c488"/><rect x="7.8" y="0" width="2" height="2.2" fill="#50508a"/><rect x="7.8" y="2.9" width="2" height="2.2" fill="#6a6a9a"/><rect x="7.8" y="5.8" width="2" height="2.6" fill="#c4c488"/></svg>
<div class="a" style="left:619px;top:299.50px;line-height:16px;font-size:10.8px;color:#1a1a1a;letter-spacing:-0.33px">BKPSRAMEN</div>
<div class="a" style="left:705px;top:299.90px;line-height:16px;font-size:11.3px;color:#2a2a2a;">[18:1]</div>
<div class="a" style="left:770px;top:299.90px;line-height:16px;font-size:11.3px;color:#1a1a1a;">0x0</div>
<svg class="a" style="left:604px;top:321.0px" width="11" height="9" viewBox="0 0 11 9"><rect x="0.0" y="0" width="2" height="2.2" fill="#50508a"/><rect x="0.0" y="2.9" width="2" height="2.2" fill="#6a6a9a"/><rect x="0.0" y="5.8" width="2" height="2.6" fill="#c4c488"/><rect x="2.6" y="0" width="2" height="2.2" fill="#50508a"/><rect x="2.6" y="2.9" width="2" height="2.2" fill="#6a6a9a"/><rect x="2.6" y="5.8" width="2" height="2.6" fill="#c4c488"/><rect x="5.2" y="0" width="2" height="2.2" fill="#50508a"/><rect x="5.2" y="2.9" width="2" height="2.2" fill="#6a6a9a"/><rect x="5.2" y="5.8" width="2" height="2.6" fill="#c4c488"/><rect x="7.8" y="0" width="2" height="2.2" fill="#50508a"/><rect x="7.8" y="2.9" width="2" height="2.2" fill="#6a6a9a"/><rect x="7.8" y="5.8" width="2" height="2.6" fill="#c4c488"/></svg>
<div class="a" style="left:619px;top:317.00px;line-height:16px;font-size:10.8px;color:#1a1a1a;letter-spacing:-0.33px">CRCEN</div>
<div class="a" style="left:705px;top:317.40px;line-height:16px;font-size:11.3px;color:#2a2a2a;">[12:1]</div>
<div class="a" style="left:770px;top:317.40px;line-height:16px;font-size:11.3px;color:#1a1a1a;">0x0</div>
<svg class="a" style="left:604px;top:338.5px" width="11" height="9" viewBox="0 0 11 9"><rect x="0.0" y="0" width="2" height="2.2" fill="#50508a"/><rect x="0.0" y="2.9" width="2" height="2.2" fill="#6a6a9a"/><rect x="0.0" y="5.8" width="2" height="2.6" fill="#c4c488"/><rect x="2.6" y="0" width="2" height="2.2" fill="#50508a"/><rect x="2.6" y="2.9" width="2" height="2.2" fill="#6a6a9a"/><rect x="2.6" y="5.8" width="2" height="2.6" fill="#c4c488"/><rect x="5.2" y="0" width="2" height="2.2" fill="#50508a"/><rect x="5.2" y="2.9" width="2" height="2.2" fill="#6a6a9a"/><rect x="5.2" y="5.8" width="2" height="2.6" fill="#c4c488"/><rect x="7.8" y="0" width="2" height="2.2" fill="#50508a"/><rect x="7.8" y="2.9" width="2" height="2.2" fill="#6a6a9a"/><rect x="7.8" y="5.8" width="2" height="2.6" fill="#c4c488"/></svg>
<div class="a" style="left:619px;top:334.50px;line-height:16px;font-size:10.8px;color:#1a1a1a;letter-spacing:-0.33px">GPIOIEN</div>
<div class="a" style="left:705px;top:334.90px;line-height:16px;font-size:11.3px;color:#2a2a2a;">[8:1]</div>
<div class="a" style="left:770px;top:334.90px;line-height:16px;font-size:11.3px;color:#1a1a1a;">0x0</div>
<div class="a" style="left:987px;top:120px;width:12px;height:231px;background:#f0f0f0;"></div>
<div class="a" style="left:988px;top:171px;width:10px;height:16px;background:#cdcdcd;"></div>
<svg class="a" style="left:989.5px;top:125px" width="7" height="5" viewBox="0 0 7 5"><path d="M0.8 4L3.5 1.2L6.2 4" fill="none" stroke="#333" stroke-width="1.3"/></svg>
<svg class="a" style="left:989.5px;top:343px" width="7" height="5" viewBox="0 0 7 5"><path d="M0.8 1L3.5 3.8L6.2 1" fill="none" stroke="#333" stroke-width="1.3"/></svg>
<div class="a" style="left:554px;top:351px;width:445px;height:31px;background:#fff;"></div>
<div class="a" style="left:555px;top:361.70px;line-height:16px;font-size:10.6px;color:#1a1a1a;">MSB</div>
<div class="a" style="left:580.6px;top:358px;width:13.6px;height:21px;background:#f0f0f0;border:1px solid #d6d6d6;font-size:11.3px;line-height:19px;text-align:center;color:#9a9a9a">0</div>
<div class="a" style="left:596.0px;top:358px;width:13.6px;height:21px;background:#f0f0f0;border:1px solid #d6d6d6;font-size:11.3px;line-height:19px;text-align:center;color:#9a9a9a">0</div>
<div class="a" style="left:611.5px;top:358px;width:13.6px;height:21px;background:#f0f0f0;border:1px solid #d6d6d6;font-size:11.3px;line-height:19px;text-align:center;color:#9a9a9a">0</div>
<div class="a" style="left:626.9px;top:358px;width:13.6px;height:21px;background:#7d7d7d;border:1px solid #6a6a6a;font-size:11.3px;line-height:19px;text-align:center;color:#1a1a1a">0</div>
<div class="a" style="left:642.3px;top:358px;width:13.6px;height:21px;background:#f0f0f0;border:1px solid #d6d6d6;font-size:11.3px;line-height:19px;text-align:center;color:#9a9a9a">0</div>
<div class="a" style="left:657.8px;top:358px;width:13.6px;height:21px;background:#f0f0f0;border:1px solid #d6d6d6;font-size:11.3px;line-height:19px;text-align:center;color:#9a9a9a">0</div>
<div class="a" style="left:673.2px;top:358px;width:13.6px;height:21px;background:#f0f0f0;border:1px solid #d6d6d6;font-size:11.3px;line-height:19px;text-align:center;color:#9a9a9a">0</div>
<div class="a" style="left:688.6px;top:358px;width:13.6px;height:21px;background:#f0f0f0;border:1px solid #d6d6d6;font-size:11.3px;line-height:19px;text-align:center;color:#9a9a9a">0</div>
<div class="a" style="left:706.0px;top:358px;width:13.6px;height:21px;background:#f0f0f0;border:1px solid #d6d6d6;font-size:11.3px;line-height:19px;text-align:center;color:#9a9a9a">0</div>
<div class="a" style="left:721.4px;top:358px;width:13.6px;height:21px;background:#f0f0f0;border:1px solid #d6d6d6;font-size:11.3px;line-height:19px;text-align:center;color:#9a9a9a">0</div>
<div class="a" style="left:736.9px;top:358px;width:13.6px;height:21px;background:#f0f0f0;border:1px solid #d6d6d6;font-size:11.3px;line-height:19px;text-align:center;color:#9a9a9a">0</div>
<div class="a" style="left:752.3px;top:358px;width:13.6px;height:21px;background:#f0f0f0;border:1px solid #d6d6d6;font-size:11.3px;line-height:19px;text-align:center;color:#9a9a9a">1</div>
<div class="a" style="left:767.7px;top:358px;width:13.6px;height:21px;background:#f0f0f0;border:1px solid #d6d6d6;font-size:11.3px;line-height:19px;text-align:center;color:#9a9a9a">0</div>
<div class="a" style="left:783.1px;top:358px;width:13.6px;height:21px;background:#f0f0f0;border:1px solid #d6d6d6;font-size:11.3px;line-height:19px;text-align:center;color:#9a9a9a">0</div>
<div class="a" style="left:798.6px;top:358px;width:13.6px;height:21px;background:#f0f0f0;border:1px solid #d6d6d6;font-size:11.3px;line-height:19px;text-align:center;color:#9a9a9a">0</div>
<div class="a" style="left:814.0px;top:358px;width:13.6px;height:21px;background:#f0f0f0;border:1px solid #d6d6d6;font-size:11.3px;line-height:19px;text-align:center;color:#9a9a9a">0</div>
<div class="a" style="left:831.4px;top:358px;width:13.6px;height:21px;background:#f0f0f0;border:1px solid #d6d6d6;font-size:11.3px;line-height:19px;text-align:center;color:#9a9a9a">0</div>
<div class="a" style="left:846.8px;top:358px;width:13.6px;height:21px;background:#f0f0f0;border:1px solid #d6d6d6;font-size:11.3px;line-height:19px;text-align:center;color:#9a9a9a">0</div>
<div class="a" style="left:862.3px;top:358px;width:13.6px;height:21px;background:#f0f0f0;border:1px solid #d6d6d6;font-size:11.3px;line-height:19px;text-align:center;color:#9a9a9a">0</div>
<div class="a" style="left:877.7px;top:358px;width:13.6px;height:21px;background:#f0f0f0;border:1px solid #d6d6d6;font-size:11.3px;line-height:19px;text-align:center;color:#9a9a9a">0</div>
<div class="a" style="left:893.1px;top:358px;width:13.6px;height:21px;background:#f0f0f0;border:1px solid #d6d6d6;font-size:11.3px;line-height:19px;text-align:center;color:#9a9a9a">0</div>
<div class="a" style="left:908.5px;top:358px;width:13.6px;height:21px;background:#f0f0f0;border:1px solid #d6d6d6;font-size:11.3px;line-height:19px;text-align:center;color:#9a9a9a">0</div>
<div class="a" style="left:924.0px;top:358px;width:13.6px;height:21px;background:#f0f0f0;border:1px solid #d6d6d6;font-size:11.3px;line-height:19px;text-align:center;color:#9a9a9a">0</div>
<div class="a" style="left:939.4px;top:358px;width:13.6px;height:21px;background:#f0f0f0;border:1px solid #d6d6d6;font-size:11.3px;line-height:19px;text-align:center;color:#9a9a9a">0</div>
<div class="a" style="left:955.7px;top:358px;width:13.6px;height:21px;background:#f0f0f0;border:1px solid #d6d6d6;font-size:11.3px;line-height:19px;text-align:center;color:#9a9a9a">1</div>
<div class="a" style="left:971.1px;top:358px;width:13.6px;height:21px;background:#f0f0f0;border:1px solid #d6d6d6;font-size:11.3px;line-height:19px;text-align:center;color:#9a9a9a">0</div>
<div class="a" style="left:986.6px;top:358px;width:13.6px;height:21px;background:#f0f0f0;border:1px solid #d6d6d6;font-size:11.3px;line-height:19px;text-align:center;color:#9a9a9a">0</div>
<div class="a" style="left:554px;top:382px;width:445px;height:83px;background:#fff;border:1px solid #a8a8a8;border-right:none"></div>
<div class="a" style="left:560px;top:385.00px;line-height:16px;font-size:11.2px;color:#1a1a1a;">Bit field:</div>
<div class="a" style="left:665px;top:385.00px;line-height:16px;font-size:10.2px;color:#1a1a1a;">ETHMACPTPEN</div>
<div class="a" style="left:560px;top:400.20px;line-height:16px;font-size:11.2px;color:#1a1a1a;">LSB:</div>
<div class="a" style="left:665px;top:400.20px;line-height:16px;font-size:11.2px;color:#1a1a1a;">28</div>
<div class="a" style="left:560px;top:415.70px;line-height:16px;font-size:11.2px;color:#1a1a1a;">MSB:</div>
<div class="a" style="left:665px;top:415.70px;line-height:16px;font-size:11.2px;color:#1a1a1a;">29</div>
<div class="a" style="left:560px;top:431.10px;line-height:16px;font-size:11.2px;color:#1a1a1a;">Size:</div>
<div class="a" style="left:665px;top:431.10px;line-height:16px;font-size:11.2px;color:#1a1a1a;">1</div>
<div class="a" style="left:560px;top:446.70px;line-height:16px;font-size:11.2px;color:#1a1a1a;">Reset value:</div>
<div class="a" style="left:691px;top:446.70px;line-height:16px;font-size:11.2px;color:#1a1a1a;">0x0</div>
<div class="a" style="left:336px;top:467px;width:663px;height:46px;background:#f4f4f4;border:1px solid #e0e0e0;border-right:none;border-bottom:none"></div>
<div class="a" style="left:337px;top:468px;width:662px;height:22px;background:#ececec;"></div>
<div class="a" style="left:337px;top:468px;width:79px;height:22px;background:#f3f3f3;"></div>
<div class="a" style="left:416px;top:468px;width:1px;height:22px;background:#e2e2e2;"></div>
<svg class="a" style="left:341px;top:475px" width="12" height="12" viewBox="0 0 12 12"><rect x="0.5" y="0.5" width="11" height="8" rx="1" fill="#dfe8f2" stroke="#4a6a98"/><rect x="2.5" y="2.5" width="7" height="4" fill="#7a9ac8"/><path d="M3 11H9" stroke="#4a6a98" stroke-width="1.4"/></svg>
<div class="a" style="left:355px;top:472.70px;line-height:16px;font-size:11.4px;color:#1a1a1a;">Console</div>
<svg class="a" style="left:403px;top:477px" width="8" height="8" viewBox="0 0 8 8"><path d="M1.2 1.2L6.8 6.8M6.8 1.2L1.2 6.8" stroke="#707070" stroke-width="3.2" stroke-linecap="round"/><path d="M1.2 1.2L6.8 6.8M6.8 1.2L1.2 6.8" stroke="#f4f4f4" stroke-width="1.5" stroke-linecap="round"/></svg>
<svg class="a" style="left:418px;top:474px" width="11" height="13" viewBox="0 0 11 13"><rect x="0.5" y="0.5" width="9" height="12" fill="#fafafa" stroke="#a08060" stroke-width="0.8"/><circle cx="5" cy="4" r="2" fill="#e04040"/><rect x="2" y="8" width="6" height="3" fill="#e8c060"/></svg>
<div class="a" style="left:432px;top:472.70px;line-height:16px;font-size:11.5px;color:#1a1a1a;">Problems</div>
<svg class="a" style="left:488px;top:475px" width="11" height="11" viewBox="0 0 11 11"><circle cx="5.5" cy="5.5" r="5.2" fill="#5a8ad0"/><path d="M4 3L8 5.5L4 8Z" fill="#fff"/></svg>
<div class="a" style="left:502px;top:472.70px;line-height:16px;font-size:10.6px;color:#1a1a1a;">Executables</div>
<svg class="a" style="left:568px;top:475px" width="12" height="12" viewBox="0 0 12 12"><rect x="0.5" y="0.5" width="9" height="9" fill="#e0e8f0" stroke="#3a5a88"/><circle cx="8" cy="8" r="3.3" fill="#40a050"/></svg>
<div class="a" style="left:582px;top:472.70px;line-height:16px;font-size:11.2px;color:#1a1a1a;">Debugger Console</div>
<svg class="a" style="left:686px;top:475px" width="7" height="12" viewBox="0 0 7 12"><rect x="0.7" y="0.7" width="5.6" height="10.6" rx="2.5" fill="#eef4fc" stroke="#3a70c0" stroke-width="1.2"/></svg>
<div class="a" style="left:697px;top:472.70px;line-height:16px;font-size:12px;color:#1a1a1a;">Memory</div>
<svg class="a" style="left:748px;top:474px" width="11" height="13" viewBox="0 0 11 13"><path d="M2 2V11M2 6H8M2 11H8" stroke="#3a9a4a" stroke-width="1.4"/><circle cx="2" cy="2" r="1.8" fill="#3a9a4a"/><circle cx="9" cy="6" r="1.8" fill="#3a9a4a"/><circle cx="9" cy="11" r="1.8" fill="#3a9a4a"/></svg>
<div class="a" style="left:762px;top:472.70px;line-height:16px;font-size:11.3px;color:#1a1a1a;">Call Hierarchy</div>
<svg class="a" style="left:967px;top:473.5px" width="8" height="4" viewBox="0 0 8 4"><rect x="0.6" y="0.6" width="6.8" height="2.8" rx="0.6" fill="#fafafa" stroke="#6a6a6a" stroke-width="1.1"/></svg>
<svg class="a" style="left:984px;top:474.3px" width="8" height="8" viewBox="0 0 8 8"><rect x="0.6" y="0.6" width="6.8" height="6.8" fill="#fcfcfc" stroke="#6a6a6a" stroke-width="1.1"/><rect x="0.6" y="0.6" width="6.8" height="1.6" fill="#6a6a6a"/></svg>
<div class="a" style="left:337px;top:490px;width:662px;height:21px;background:#f3f3f3;"></div>
<svg class="a" style="left:775px;top:495px" width="10" height="10" viewBox="0 0 10 10"><rect x="0.5" y="0.5" width="9" height="9" fill="#e43a3a" stroke="#c02a2a"/></svg>
<svg class="a" style="left:791px;top:495px" width="10" height="10" viewBox="0 0 10 10"><path d="M1 1L9 9M9 1L1 9" stroke="#a8a8a8" stroke-width="2.6"/></svg>
<svg class="a" style="left:806px;top:494px" width="13" height="12" viewBox="0 0 13 12"><path d="M1 1L8 8M8 1L1 8M5 4L12 11M12 4L5 11" stroke="#b4b4b4" stroke-width="2.2"/></svg>
<div class="a" style="left:823px;top:492px;width:1px;height:15px;background:#bcbcbc;"></div>
<svg class="a" style="left:830px;top:494px" width="12" height="12" viewBox="0 0 12 12"><rect x="0.5" y="0.5" width="8" height="10" fill="#f0f0f0" stroke="#8a9aaa"/><path d="M6 6L11 11M11 6L6 11" stroke="#6a6a6a" stroke-width="1.4"/></svg>
<svg class="a" style="left:846px;top:494px" width="12" height="12" viewBox="0 0 12 12"><rect x="4.5" y="0.5" width="7" height="11" fill="#e8e8e8" stroke="#6a6a6a"/><rect x="0.5" y="5.5" width="6" height="6" fill="#e8c050" stroke="#907020"/></svg>
<svg class="a" style="left:864px;top:494px" width="12" height="12" viewBox="0 0 12 12"><rect x="0.5" y="0.5" width="8" height="10" fill="#f0f0f0" stroke="#8a8a8a"/><rect x="4.5" y="4.5" width="7" height="7" fill="#f0d890" stroke="#a08030"/></svg>
<div class="a" style="left:878px;top:491px;width:17px;height:16px;background:#cde4f7;border:1px solid #a8cdec"></div>
<div class="a" style="left:895px;top:491px;width:17px;height:16px;background:#cde4f7;border:1px solid #a8cdec"></div>
<svg class="a" style="left:881px;top:494px" width="12" height="11" viewBox="0 0 12 11"><rect x="0.5" y="0.5" width="10" height="7" rx="1" fill="#f4f8fc" stroke="#4a6a98"/><path d="M2 10H7" stroke="#4a6a98"/></svg>
<svg class="a" style="left:898px;top:494px" width="12" height="11" viewBox="0 0 12 11"><rect x="0.5" y="0.5" width="10" height="7" rx="1" fill="#f4f8fc" stroke="#4a6a98"/><path d="M4 2L7 5M7 2L4 5" stroke="#d02a2a" stroke-width="1.2"/></svg>
<div class="a" style="left:913.5px;top:492px;width:1px;height:15px;background:#bcbcbc;"></div>
<svg class="a" style="left:920px;top:494px" width="13" height="11" viewBox="0 0 13 11"><rect x="0.5" y="3.5" width="10" height="7" fill="#f4f4f4" stroke="#4a6a98"/><rect x="0.5" y="3.5" width="10" height="2" fill="#4a6a98"/><path d="M6 6L11 1" stroke="#30a050" stroke-width="2.2"/></svg>
<svg class="a" style="left:938px;top:494px" width="11" height="12" viewBox="0 0 11 12"><rect x="0.5" y="0.5" width="10" height="8" rx="1" fill="#dfe8f2" stroke="#3a5a88" stroke-width="1.1"/><rect x="2.5" y="2.5" width="6" height="4" fill="#6a8ac0"/><path d="M3 11H8" stroke="#3a5a88" stroke-width="1.4"/></svg>
<svg class="a" style="left:956px;top:498px" width="6" height="4" viewBox="0 0 6 4"><path d="M0 0H6L3 3.5Z" fill="#1a1a1a"/></svg>
<svg class="a" style="left:969px;top:494px" width="12" height="12" viewBox="0 0 12 12"><rect x="0.5" y="2.5" width="10" height="9" fill="#fbfbf0" stroke="#7a8aa0"/><rect x="0.5" y="2.5" width="10" height="2" fill="#5a8ac8"/><circle cx="9.5" cy="2.5" r="2" fill="#f0d060" stroke="#b09030" stroke-width="0.6"/></svg>
<svg class="a" style="left:989px;top:498px" width="6" height="4" viewBox="0 0 6 4"><path d="M0 0H6L3 3.5Z" fill="#1a1a1a"/></svg>
<div class="a" style="left:338px;top:511px;width:650px;height:1.5px;overflow:hidden"><div style="position:absolute;left:1px;top:0;font:11px/14px 'Liberation Sans';color:#222;white-space:nowrap;margin-top:-3.5px">STM32CubeIDE GDB Server v1.5.0 - Copyright (c) ST</div></div>
<div class="a" style="left:0px;top:513px;width:999px;height:20px;background:#f0f0f0;border-top:1px solid #e4e4e4"></div>
<div class="a" style="left:671px;top:514px;width:40px;height:17px;background:#f4f4f4;border:1px solid #d8d8d8;border-top:none"></div>
<svg class="a" style="left:680px;top:516px" width="12" height="12" viewBox="0 0 12 12"><circle cx="4" cy="4.5" r="3.4" fill="#f4e070" stroke="#b09a30" stroke-width="0.8"/><rect x="5.5" y="5.5" width="6" height="5.5" fill="#e8eef8" stroke="#5a6a88" stroke-width="0.9"/></svg>
<svg class="a" style="left:712px;top:514px" width="2" height="17" viewBox="0 0 2 17"><path d="M1 1V16" stroke="#9a9a9a" stroke-dasharray="1.5 1.5"/></svg>
<svg class="a" style="left:981px;top:516px" width="13" height="14" viewBox="0 0 13 14"><rect x="0.5" y="2.5" width="9" height="6" fill="#b8d8b0" stroke="#7a9a7a" stroke-width="0.8"/><circle cx="9" cy="10" r="3.4" fill="#e04a4a"/><path d="M7.5 8.5L10.5 11.5M10.5 8.5L7.5 11.5" stroke="#fff" stroke-width="1"/></svg>
<div class="a" style="left:0px;top:533px;width:999px;height:29px;background:linear-gradient(90deg,#1f3540 0%,#1e313c 25%,#1c2a38 55%,#1b2840 100%);"></div>
<svg class="a" style="left:12px;top:541px" width="12" height="12" viewBox="0 0 12 12"><path d="M0 1.6L5 0.9V5.6H0ZM5.9 0.8L12 0V5.6H5.9ZM0 6.4H5V11.1L0 10.4ZM5.9 6.4H12V12L5.9 11.2Z" fill="#fff"/></svg>
<div class="a" style="left:35px;top:533px;width:211px;height:29px;background:#f2f2f2;"></div>
<svg class="a" style="left:43px;top:541px" width="13" height="13" viewBox="0 0 13 13"><circle cx="8" cy="5" r="4" fill="none" stroke="#222" stroke-width="1.2"/><path d="M5.2 7.8L1 12" stroke="#222" stroke-width="1.3"/></svg>
<div class="a" style="left:65px;top:540.30px;line-height:16px;font-size:10.7px;color:#2a2a2a;">Type here to search</div>
<svg class="a" style="left:257px;top:541px" width="13" height="13" viewBox="0 0 13 13"><rect x="2.5" y="3.5" width="6" height="6" fill="none" stroke="#ddd"/><path d="M0 1H11M0 12H11M12 3V5M12 7V10" stroke="#ddd" stroke-width="1.2"/></svg>
<svg class="a" style="left:291px;top:538px" width="19" height="19" viewBox="0 0 19 19"><defs><linearGradient id="eg" x1="0" y1="0" x2="1" y2="1"><stop offset="0" stop-color="#38c8a0"/><stop offset="0.5" stop-color="#2a8ad8"/><stop offset="1" stop-color="#1a5ab8"/></linearGradient></defs><circle cx="9.5" cy="9.5" r="9" fill="url(#eg)"/><path d="M9 7Q13 6 14.5 9.5T10 13Q6 12.5 6.5 9" fill="#1c2a36"/><circle cx="13" cy="8" r="3" fill="#6ad870"/></svg>
<svg class="a" style="left:327px;top:539px" width="17" height="16" viewBox="0 0 17 16"><path d="M0 2H6L8 4H17V15H0Z" fill="#f4c430"/><rect x="0" y="5" width="17" height="10" fill="#fcd65a"/><rect x="5" y="9" width="7" height="5" fill="#3a78c8"/></svg>
<svg class="a" style="left:361px;top:538px" width="21" height="20" viewBox="0 0 21 20"><circle cx="9" cy="9" r="8.5" fill="#e04030"/><path d="M9 9L1.5 13Q4 18 9 17.5Z" fill="#40a050"/><path d="M9 9L16.5 13Q18 7 15.5 4.5Z" fill="#f8c020"/><circle cx="9" cy="9" r="3.6" fill="#fff"/><circle cx="9" cy="9" r="2.8" fill="#3a78d8"/><circle cx="15" cy="14" r="5" fill="#7a4ad0"/><text x="12.8" y="17" font-size="7" font-family="Liberation Sans" font-weight="bold" fill="#fff">D</text></svg>
<div class="a" style="left:286px;top:560px;width:28px;height:2px;background:#8ac4f0;"></div>
<div class="a" style="left:321px;top:560px;width:28px;height:2px;background:#8ac4f0;"></div>
<div class="a" style="left:356px;top:560px;width:29px;height:2px;background:#8ac4f0;"></div>
<div class="a" style="left:529px;top:560px;width:32px;height:2px;background:#8ac4f0;"></div>
<div class="a" style="left:570px;top:560px;width:24px;height:2px;background:#8ac4f0;"></div>
<div class="a" style="left:600px;top:560px;width:28px;height:2px;background:#8ac4f0;"></div>
<div class="a" style="left:635px;top:560px;width:28px;height:2px;background:#8ac4f0;"></div>
<div class="a" style="left:669px;top:560px;width:28px;height:2px;background:#8ac4f0;"></div>
<div class="a" style="left:704px;top:560px;width:28px;height:2px;background:#8ac4f0;"></div>
<svg class="a" style="left:399px;top:538px" width="16" height="18" viewBox="0 0 16 18"><path d="M1 16L7 2H9L13 16" fill="none" stroke="#8a8a8a" stroke-width="2.2"/><circle cx="12" cy="5" r="2" fill="none" stroke="#e8c040" stroke-width="1.4"/><circle cx="13" cy="11" r="2" fill="none" stroke="#e8c040" stroke-width="1.4"/><path d="M3 11H11" stroke="#e8c040" stroke-width="1.6"/></svg>
<svg class="a" style="left:434px;top:540px" width="14" height="15" viewBox="0 0 14 15"><rect x="1" y="1" width="3" height="2" fill="#ddd"/><rect x="10" y="1" width="3" height="2" fill="#ddd"/><rect x="10" y="6" width="3" height="2" fill="#ddd"/><rect x="10" y="11" width="3" height="2" fill="#ddd"/><path d="M0 13H5M2.5 9V12" stroke="#ddd" stroke-width="1.2"/></svg>
<svg class="a" style="left:468px;top:540px" width="17" height="14" viewBox="0 0 17 14"><path d="M1 7L7 1L12 4L7 9Z" fill="#fff"/><path d="M7 9L12 4L16 7L11 12Z" fill="#3a5a98"/><path d="M1 7L7 12" stroke="#111" stroke-width="1.5"/></svg>
<svg class="a" style="left:501px;top:538px" width="19" height="18" viewBox="0 0 19 18"><rect x="0.5" y="0.5" width="16" height="12" fill="#8ab0d8" stroke="#5a7aa0"/><rect x="2" y="2" width="13" height="9" fill="#2a5a98"/><path d="M3 4H13M3 6H9M3 8H11" stroke="#a8c8f0" stroke-width="1"/><rect x="5" y="11" width="13" height="6" fill="#40a040"/></svg>
<div class="a" style="left:529px;top:533px;width:32px;height:27px;background:#3a4652;"></div>
<svg class="a" style="left:536px;top:538px" width="19" height="18" viewBox="0 0 19 18"><rect x="0" y="0" width="19" height="18" fill="#3ea2dc"/><text x="2" y="13" font-size="9.5" font-family="Liberation Sans" font-weight="bold" fill="#eaf6fc">IDE</text></svg>
<svg class="a" style="left:571px;top:539px" width="18" height="15" viewBox="0 0 18 15"><rect x="0.5" y="0.5" width="17" height="14" fill="#0c0c0c" stroke="#707070"/><rect x="0.5" y="0.5" width="17" height="2" fill="#707070"/><path d="M2 5L4 6L2 7M5 7H8" stroke="#ddd" stroke-width="0.8"/></svg>
<svg class="a" style="left:605px;top:538px" width="18" height="18" viewBox="0 0 18 18"><rect x="1" y="1" width="14" height="15" fill="#e8f4e0" stroke="#9ac890"/><path d="M4 4L11 13M11 4L4 13" stroke="#1a8a3a" stroke-width="2.6"/><path d="M10 14L17 11V17H10Z" fill="#c8e8b8"/></svg>
<svg class="a" style="left:640px;top:538px" width="17" height="18" viewBox="0 0 17 18"><rect x="0" y="0" width="17" height="18" fill="#3ea2dc"/><text x="1" y="12.5" font-size="8.5" font-family="Liberation Sans" font-weight="bold" fill="#eaf6fc">MX</text></svg>
<svg class="a" style="left:674px;top:538px" width="18" height="18" viewBox="0 0 18 18"><rect x="0" y="0" width="18" height="18" fill="#e83a30"/><path d="M3 9L7 5L11 9L7 13Z" fill="#fff"/><path d="M11 5L15 9L11 13" fill="none" stroke="#fff" stroke-width="1.5"/></svg>
<svg class="a" style="left:708px;top:538px" width="18" height="18" viewBox="0 0 18 18"><rect x="0" y="0" width="18" height="18" fill="#e83a30"/><path d="M3 9L7 5L11 9L7 13Z" fill="#fff"/><path d="M11 5L15 9L11 13" fill="none" stroke="#fff" stroke-width="1.5"/></svg>
<svg class="a" style="left:752px;top:537px" width="20" height="20" viewBox="0 0 20 20"><circle cx="10" cy="10" r="7" fill="#f4a030"/><path d="M2 8Q2 3 7 4Q9 1 12 3" fill="#c8d8e8"/><ellipse cx="6" cy="5" rx="5" ry="3" fill="#c8d8f0"/><ellipse cx="14" cy="16" rx="5" ry="3" fill="#c8d8f0"/></svg>
<div class="a" style="left:776.5px;top:538.70px;line-height:16px;font-size:10.6px;color:#fff;letter-spacing:-0.5px">34°C</div>
<svg class="a" style="left:817px;top:543px" width="10" height="6" viewBox="0 0 10 6"><path d="M0.8 5.2L5 1L9.2 5.2" fill="none" stroke="#fff" stroke-width="1.2"/></svg>
<svg class="a" style="left:834px;top:540px" width="11" height="14" viewBox="0 0 11 14"><rect x="0.5" y="3.5" width="7" height="7" rx="2" fill="none" stroke="#eee"/><path d="M8 6L10.5 4.5V9.5L8 8" fill="none" stroke="#eee"/><path d="M2 1Q4 0 6 1M2 13Q4 14 6 13" fill="none" stroke="#eee"/></svg>
<svg class="a" style="left:850px;top:540px" width="13" height="13" viewBox="0 0 13 13"><rect x="2.5" y="1.5" width="10" height="8" fill="none" stroke="#eee"/><path d="M0 3H3V7H0M6 10V12M3 12.5H10" stroke="#eee"/></svg>
<svg class="a" style="left:867px;top:541px" width="13" height="12" viewBox="0 0 13 12"><path d="M0.5 4H3L6.5 1V11L3 8H0.5Z" fill="none" stroke="#eee"/><path d="M8.5 3.5Q10 6 8.5 8.5M10.5 2Q13 6 10.5 10" fill="none" stroke="#ccc"/></svg>
<div class="a" style="left:887px;top:539.70px;line-height:16px;font-size:10.2px;color:#fff;letter-spacing:-1.2px">ENG</div>
<div class="a" style="left:924.5px;top:533.20px;line-height:16px;font-size:10px;color:#fff;letter-spacing:-0.7px">17:53</div>
<div class="a" style="left:913px;top:547.10px;line-height:16px;font-size:10px;color:#fff;letter-spacing:-0.85px">14-05-2024</div>
<svg class="a" style="left:968px;top:540px" width="19" height="20" viewBox="0 0 19 20"><path d="M1 1H15V11H8L5 14V11H1Z" fill="#fff"/><path d="M4 4H12M4 7H12" stroke="#1b2942" stroke-width="1"/><circle cx="12.5" cy="14" r="4.5" fill="#1b2942" stroke="#ddd" stroke-width="1"/><text x="11" y="17" font-size="6.5" font-family="Liberation Sans" fill="#fff">1</text></svg>
<div class="a" style="left:995px;top:533px;width:1px;height:29px;background:#3a4a5a;"></div>
</body></html>
